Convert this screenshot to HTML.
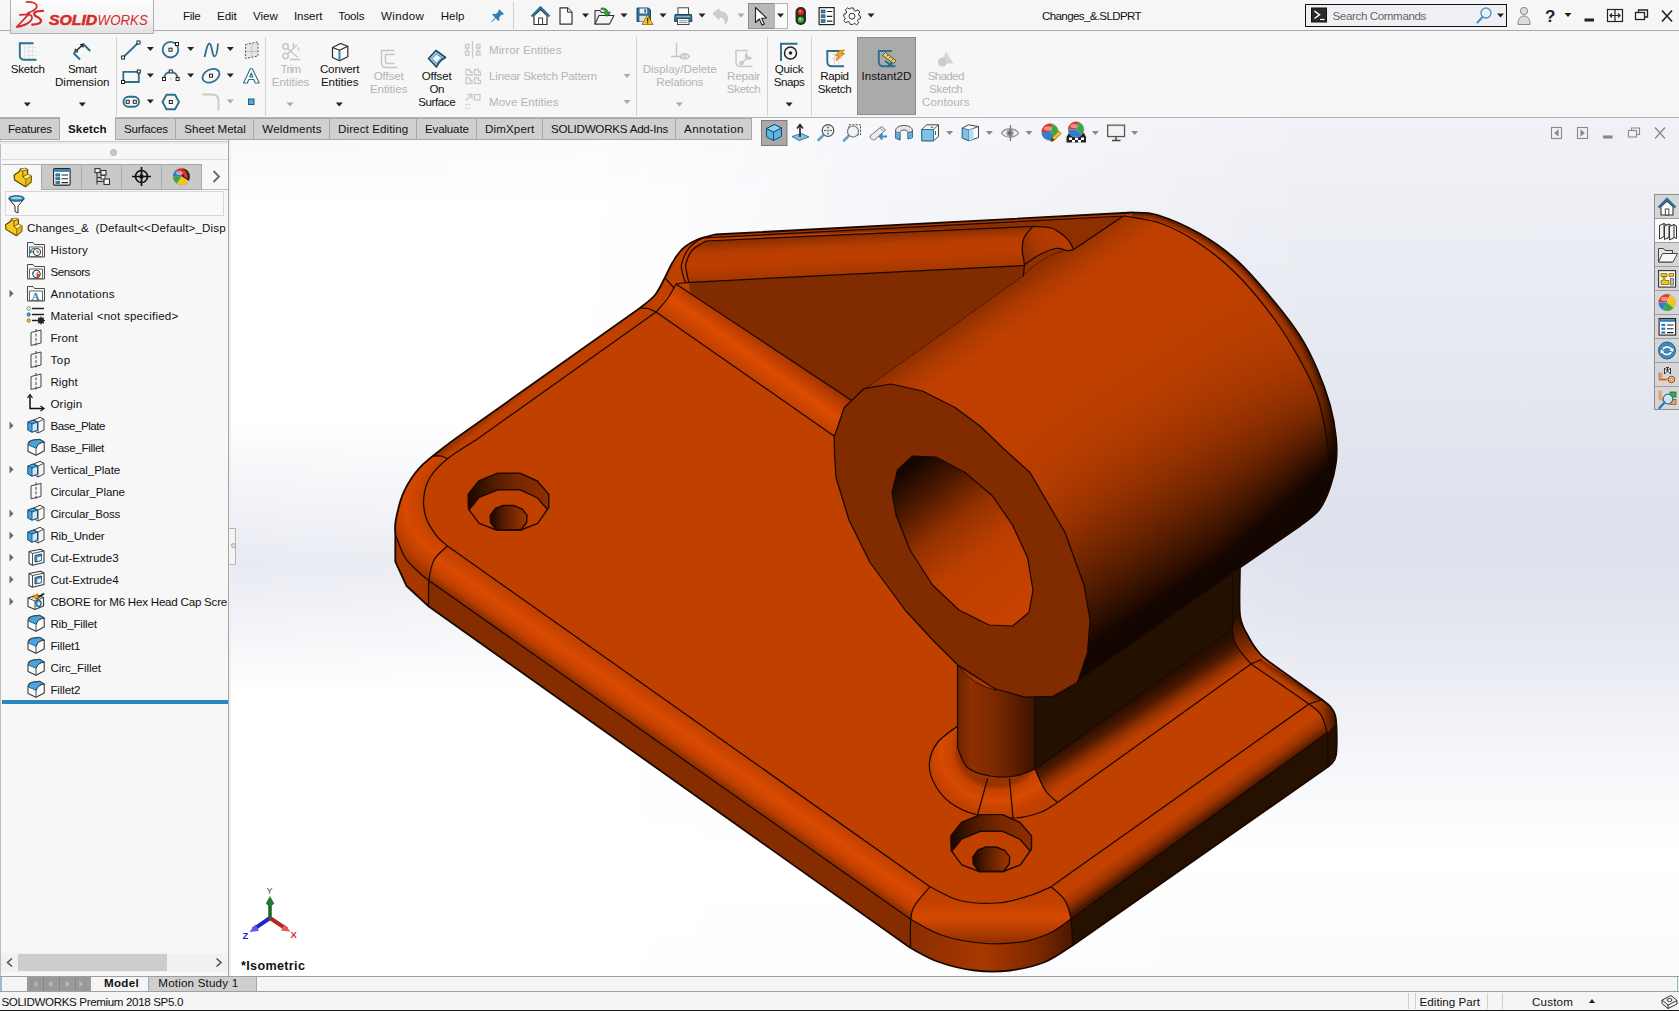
<!DOCTYPE html>
<html><head><meta charset="utf-8"><title>SOLIDWORKS - Changes_&amp;.SLDPRT</title>
<style>
html,body{margin:0;padding:0;background:#f7f7f7;}
body{width:1679px;height:1011px;overflow:hidden;font-family:"Liberation Sans",sans-serif;font-size:11.6px;color:#111;}
#app{position:relative;width:1679px;height:1011px;overflow:hidden;background:#f7f7f7;}
.t{position:absolute;white-space:pre;line-height:15px;height:15px;}
.a{position:absolute;}
.tab{position:absolute;top:118px;height:21px;background:#d0d0d0;border:1px solid #a8a8a8;border-bottom:none;box-sizing:border-box;}
.vsep{position:absolute;width:1px;background:#d2d2d2;top:37px;height:79px;}
.dd{position:absolute;width:0;height:0;border-left:3.5px solid transparent;border-right:3.5px solid transparent;border-top:4px solid #222;}
.dd.g{border-top-color:#aaa;}
.exp{position:absolute;width:0;height:0;border-top:4px solid transparent;border-bottom:4px solid transparent;border-left:5px solid #555;}

</style></head>
<body>
<div id="app">
<!-- viewport background -->
<div class="a" id="vp" style="left:230px;top:118px;width:1449px;height:858px;background:#fff;overflow:hidden;">
  <div class="a" style="left:0;top:0;width:100%;height:100%;background:linear-gradient(to bottom,#f1f2f7 0%,#e6e9f1 28%,#dee1ec 49%,#e3e6ef 58%,#f5f6fa 74%,#ffffff 86%,#fbfbfd 100%);-webkit-mask-image:linear-gradient(to right,rgba(0,0,0,0) 0%,rgba(0,0,0,0) 22%,rgba(0,0,0,.55) 45%,rgba(0,0,0,1) 75%);mask-image:linear-gradient(to right,rgba(0,0,0,0) 0%,rgba(0,0,0,0) 22%,rgba(0,0,0,.55) 45%,rgba(0,0,0,1) 75%);"></div>
  <div class="a" style="left:0;top:0;width:45%;height:100%;background:linear-gradient(to bottom,#f6f7fa 0%,#ffffff 10%,#ffffff 35%,#e8eaf2 52%,#ffffff 67%,#ffffff 100%);-webkit-mask-image:linear-gradient(to right,rgba(0,0,0,1) 0%,rgba(0,0,0,.8) 40%,rgba(0,0,0,0) 100%);mask-image:linear-gradient(to right,rgba(0,0,0,1) 0%,rgba(0,0,0,.8) 40%,rgba(0,0,0,0) 100%);"></div>
</div>
<!-- top bars -->
<div class="a" style="left:0;top:0;width:1679px;height:30px;background:#f6f6f6;"></div>
<div class="a" style="left:0;top:30px;width:1679px;height:1px;background:#a9a9a9;"></div>
<div class="a" style="left:0;top:31px;width:1679px;height:86px;background:#f7f7f7;"></div>
<div class="a" style="left:0;top:117px;width:1679px;height:1px;background:#b4b4b4;"></div>
<div class="a" style="left:10px;top:-1px;width:144px;height:35px;box-sizing:border-box;border:1px solid #b0b0b0;background:linear-gradient(to bottom,#fdfdfd 0%,#f4f4f4 55%,#e2e2e2 100%);"></div>
<div class="a" style="left:513px;top:2px;width:1px;height:27px;background:#cfcfcf;"></div>
<!-- ribbon separators -->
<div class="vsep" style="left:116px"></div><div class="vsep" style="left:265px"></div><div class="vsep" style="left:636px"></div><div class="vsep" style="left:767px"></div><div class="vsep" style="left:811px"></div>
<div class="a" style="left:857px;top:37px;width:59px;height:78px;box-sizing:border-box;background:#aaaaaa;border:1px solid #8c8c8c;"></div>
<!-- left panel -->
<div class="a" style="left:0;top:139px;width:229px;height:837px;background:#f7f7f7;"></div>
<div class="a" style="left:228px;top:139px;width:1px;height:837px;background:#a5a5a5;"></div>
<div class="a" style="left:229px;top:139px;width:2px;height:837px;background:#f0f0f0;"></div>
<div class="a" style="left:0;top:139px;width:1px;height:837px;background:#bdbdbd;"></div>
<div class="a" style="left:0;top:141px;width:228px;height:1px;background:#c9c9c9;"></div>
<div class="a" style="left:0;top:142px;width:228px;height:2px;background:#ececec;"></div>
<div class="a" style="left:0;top:159px;width:228px;height:1px;background:#dcdcdc;"></div>
<div class="a" style="left:109.5px;top:148.5px;width:5px;height:5px;border-radius:50%;background:#c9c9c9;border:1px solid #b3b3b3;box-sizing:content-box;"></div>
<!-- panel tabs -->
<div class="a" style="left:41px;top:164px;width:161px;height:26px;background:#c9c9c9;border:1px solid #a9a9a9;box-sizing:border-box;"></div>
<div class="a" style="left:81px;top:165px;width:1px;height:24px;background:#a9a9a9;"></div>
<div class="a" style="left:121px;top:165px;width:1px;height:24px;background:#a9a9a9;"></div>
<div class="a" style="left:161px;top:165px;width:1px;height:24px;background:#a9a9a9;"></div>
<div class="a" style="left:2px;top:189px;width:39px;height:1px;background:#f7f7f7;"></div>
<div class="a" style="left:202px;top:189px;width:26px;height:1px;background:#bdbdbd;"></div>
<div class="a" style="left:5px;top:191px;width:219px;height:25px;box-sizing:border-box;border:1px solid #d8d8d8;background:#f9f9f9;"></div>
<div class="a" style="left:2px;top:164px;width:39px;height:1px;background:#b4b4b4;"></div>
<!-- blue rollback bar -->
<div class="a" style="left:2px;top:700px;width:226px;height:4px;background:#2a86c0;"></div>
<!-- splitter handle -->
<div class="a" style="left:229px;top:528px;width:7px;height:37px;box-sizing:border-box;background:#f4f4f4;border:1px solid #b5b5b5;border-left:none;"></div>
<div class="a" style="left:230.5px;top:543px;width:3px;height:3px;border-radius:50%;border:1px solid #aaa;background:#ddd;"></div>
<!-- h scrollbar -->
<div class="a" style="left:1px;top:953px;width:227px;height:19px;background:#f1f1f1;"></div>
<div class="a" style="left:18px;top:954px;width:149px;height:17px;background:#cdcdcd;"></div>
<svg class="a" style="left:0;top:953px" width="229" height="19"><path d="M12 5.5 L7.5 9.5 L12 13.5" fill="none" stroke="#555" stroke-width="1.6"/><path d="M216.5 5.5 L221 9.5 L216.5 13.5" fill="none" stroke="#555" stroke-width="1.6"/></svg>
<!-- bottom bars -->
<div class="a" style="left:0;top:976px;width:1679px;height:1px;background:#9f9f9f;"></div>
<div class="a" style="left:0;top:977px;width:1679px;height:14px;background:#f5f5f5;"></div>
<div class="a" style="left:0;top:977px;width:2px;height:14px;background:#9bbcc8;"></div>
<div class="a" style="left:27px;top:977px;width:64px;height:14px;background:#9a9a9a;"></div>
<svg class="a" style="left:27px;top:977px" width="64" height="14"><g fill="#b9b9b9" stroke="#8a8a8a" stroke-width=".6"><path d="M5 3v8M11 3 L6 7 L11 11z"/><path d="M26 3 L20 7 L26 11z"/><path d="M38 3 L44 7 L38 11z"/><path d="M52 3 L57 7 L52 11z M58.5 3v8"/></g><g stroke="#858585" stroke-width="1"><path d="M16.5 0v14M32.5 0v14M48.5 0v14"/></g></svg>
<div class="a" style="left:148px;top:977px;width:109px;height:14px;background:#cfcfcf;border-left:1px solid #a8a8a8;border-right:1px solid #a8a8a8;box-sizing:border-box;"></div>
<div class="a" style="left:0;top:991px;width:1679px;height:1px;background:#a0a0a0;"></div>
<div class="a" style="left:0;top:992px;width:1679px;height:18px;background:#f5f5f5;"></div>
<div class="a" style="left:0;top:1009.5px;width:1679px;height:1.5px;background:#1a1a1a;"></div>
<div class="a" style="left:1408px;top:993px;width:1px;height:16px;background:#cfcfcf;"></div>
<div class="a" style="left:1415px;top:993px;width:1px;height:16px;background:#cfcfcf;"></div>
<div class="a" style="left:1487px;top:993px;width:1px;height:16px;background:#cfcfcf;"></div>
<div class="a" style="left:1502px;top:993px;width:1px;height:16px;background:#cfcfcf;"></div>
<div class="a" style="left:1589px;top:999px;width:0;height:0;border-left:3.5px solid transparent;border-right:3.5px solid transparent;border-bottom:4px solid #222;"></div>
<div class="a" style="left:1677px;top:977px;width:1px;height:14px;background:#8fb6cc;"></div>
<!-- command manager tabs -->
<div class="tab" style="left:-1px;width:61px"></div>
<div class="a" style="left:60px;top:117px;width:55px;height:24px;background:#f7f7f7;"></div>
<div class="tab" style="left:115px;width:61px"></div><div class="tab" style="left:175px;width:79px"></div><div class="tab" style="left:253px;width:77px"></div><div class="tab" style="left:329px;width:88px"></div><div class="tab" style="left:416px;width:61px"></div><div class="tab" style="left:476px;width:67px"></div><div class="tab" style="left:542px;width:134px"></div><div class="tab" style="left:675px;width:77px"></div>
<div class="a" style="left:115px;top:139px;width:637px;height:1px;background:#a8a8a8;"></div>
<div class="a" style="left:0px;top:139px;width:60px;height:1px;background:#a8a8a8;"></div>
<!-- search box -->
<div class="a" style="left:1305px;top:4px;width:202px;height:23px;box-sizing:border-box;border:1px solid #111;background:#eff0f4;"></div>

<svg class="a" style="left:0;top:0" width="1679" height="1011" viewBox="0 0 1679 1011">
<defs>
<clipPath id="vpclip"><rect x="231" y="118" width="1448" height="858"/></clipPath>
<linearGradient id="gBL" gradientUnits="userSpaceOnUse" x1="447.5" y1="546" x2="425" y2="578"><stop offset="0" stop-color="#c04000"/><stop offset=".2" stop-color="#c94400"/><stop offset=".42" stop-color="#da4b00"/><stop offset=".6" stop-color="#d04600"/><stop offset=".78" stop-color="#bc3f00"/><stop offset=".92" stop-color="#9a3300"/><stop offset="1" stop-color="#862d00"/></linearGradient>
<linearGradient id="gBR" gradientUnits="userSpaceOnUse" x1="1051" y1="886.75" x2="1071" y2="915"><stop offset="0" stop-color="#c04000"/><stop offset=".4" stop-color="#c44100"/><stop offset=".7" stop-color="#a03500"/><stop offset=".9" stop-color="#6a2300"/><stop offset="1" stop-color="#4a1800"/></linearGradient>
<linearGradient id="gBC" gradientUnits="userSpaceOnUse" x1="990" y1="900" x2="990" y2="944"><stop offset="0" stop-color="#c04000"/><stop offset=".4" stop-color="#d64900"/><stop offset="1" stop-color="#8e2f00"/></linearGradient>
<linearGradient id="gSideC" gradientUnits="userSpaceOnUse" x1="911" y1="0" x2="1072" y2="0"><stop offset="0" stop-color="#8a2e00"/><stop offset=".45" stop-color="#a83800"/><stop offset=".8" stop-color="#7a2800"/><stop offset="1" stop-color="#4a1800"/></linearGradient>
<linearGradient id="gUL" gradientUnits="userSpaceOnUse" x1="556" y1="382" x2="545" y2="368"><stop offset="0" stop-color="#c04000"/><stop offset=".5" stop-color="#c04000"/><stop offset="1" stop-color="#8e2f00"/></linearGradient>
<linearGradient id="gVF" gradientUnits="userSpaceOnUse" x1="745" y1="374" x2="771" y2="338"><stop offset="0" stop-color="#c04000"/><stop offset=".42" stop-color="#dc4c00"/><stop offset=".8" stop-color="#b03a00"/><stop offset="1" stop-color="#822b00"/></linearGradient>
<linearGradient id="gTF" gradientUnits="userSpaceOnUse" x1="860" y1="233" x2="862" y2="274"><stop offset="0" stop-color="#862d00"/><stop offset=".3" stop-color="#b63d00"/><stop offset=".6" stop-color="#be3f00"/><stop offset="1" stop-color="#a43700"/></linearGradient>
<linearGradient id="gCyl" gradientUnits="userSpaceOnUse" x1="865" y1="389" x2="1071" y2="685"><stop offset="0" stop-color="#8e2f00"/><stop offset=".1" stop-color="#b83d00"/><stop offset=".25" stop-color="#c04000"/><stop offset=".45" stop-color="#b43c00"/><stop offset=".62" stop-color="#8a2e00"/><stop offset=".8" stop-color="#461700"/><stop offset=".92" stop-color="#1e0a00"/><stop offset="1" stop-color="#160700"/></linearGradient>
<linearGradient id="gBore" gradientUnits="userSpaceOnUse" x1="905" y1="470" x2="1015" y2="615"><stop offset="0" stop-color="#160600"/><stop offset=".18" stop-color="#4a1800"/><stop offset=".4" stop-color="#963200"/><stop offset=".62" stop-color="#bd3f00"/><stop offset="1" stop-color="#c64200"/></linearGradient>
<linearGradient id="gPost" gradientUnits="userSpaceOnUse" x1="957" y1="0" x2="1035" y2="0"><stop offset="0" stop-color="#6a2300"/><stop offset=".18" stop-color="#8e2f00"/><stop offset=".45" stop-color="#7e2a00"/><stop offset=".78" stop-color="#581d00"/><stop offset="1" stop-color="#3a1300"/></linearGradient>
<linearGradient id="gRibF" gradientUnits="userSpaceOnUse" x1="1140" y1="697" x2="1160" y2="728"><stop offset="0" stop-color="#2a0e00"/><stop offset=".3" stop-color="#4e1a00"/><stop offset=".6" stop-color="#963200"/><stop offset=".85" stop-color="#bd3f00"/><stop offset="1" stop-color="#c04000"/></linearGradient>
<linearGradient id="gHoleA" gradientUnits="userSpaceOnUse" x1="467" y1="0" x2="549" y2="0"><stop offset="0" stop-color="#1a0800"/><stop offset=".35" stop-color="#6a2300"/><stop offset=".7" stop-color="#963200"/><stop offset="1" stop-color="#a83800"/></linearGradient>
<linearGradient id="gHoleB" gradientUnits="userSpaceOnUse" x1="950" y1="0" x2="1032" y2="0"><stop offset="0" stop-color="#1a0800"/><stop offset=".35" stop-color="#6a2300"/><stop offset=".7" stop-color="#963200"/><stop offset="1" stop-color="#a83800"/></linearGradient>
<linearGradient id="gRibEnd" gradientUnits="userSpaceOnUse" x1="1236" y1="618" x2="1254" y2="662"><stop offset="0" stop-color="#2a1000"/><stop offset=".45" stop-color="#6a2300"/><stop offset="1" stop-color="#b83d00"/></linearGradient>
<radialGradient id="gRing" gradientUnits="userSpaceOnUse" cx="997" cy="752" r="70" gradientTransform="translate(0 94) scale(1 .875)"><stop offset="0" stop-color="#9a3300"/><stop offset=".55" stop-color="#9a3300"/><stop offset=".63" stop-color="#c44200"/><stop offset=".8" stop-color="#d84a00"/><stop offset="1" stop-color="#c04000"/></radialGradient>
<linearGradient id="gCap" gradientUnits="userSpaceOnUse" x1="1023" y1="250" x2="1065" y2="235"><stop offset="0" stop-color="#8e2f00"/><stop offset=".35" stop-color="#ac3900"/><stop offset="1" stop-color="#b83d00"/></linearGradient>
<linearGradient id="gEndF" gradientUnits="userSpaceOnUse" x1="1280" y1="684" x2="1286.500" y2="674.600"><stop offset="0" stop-color="#c04000"/><stop offset=".35" stop-color="#b83d00"/><stop offset=".7" stop-color="#8a2e00"/><stop offset="1" stop-color="#4a1800"/></linearGradient>
<linearGradient id="gRC" gradientUnits="userSpaceOnUse" x1="1312" y1="0" x2="1337" y2="0"><stop offset="0" stop-color="#bd3f00"/><stop offset=".45" stop-color="#963200"/><stop offset="1" stop-color="#341100"/></linearGradient>
<radialGradient id="gLC" gradientUnits="userSpaceOnUse" cx="466" cy="500" r="86"><stop offset="0" stop-color="#c04000"/><stop offset=".5" stop-color="#c04000"/><stop offset=".62" stop-color="#d04600"/><stop offset=".72" stop-color="#d64900"/><stop offset=".85" stop-color="#c04000"/><stop offset="1" stop-color="#983200"/></radialGradient>
</defs>
<g clip-path="url(#vpclip)">
<path d="M715.0 234.5 L1132.5 212.5 C1136.7 212.9 1146.2 211.5 1157.5 215.0 C1168.8 218.5 1186.7 226.1 1200.0 233.8 C1213.3 241.4 1225.0 249.5 1237.5 261.0 C1250.0 272.5 1264.6 290.0 1275.0 302.5 C1285.4 315.0 1292.9 324.8 1300.0 336.0 C1307.1 347.2 1312.5 358.5 1317.5 370.0 C1322.5 381.5 1326.9 393.8 1330.0 405.0 C1333.1 416.2 1335.0 427.9 1336.0 437.5 C1337.0 447.1 1337.0 454.2 1336.0 462.5 C1335.0 470.8 1332.8 479.6 1330.0 487.5 C1327.2 495.4 1324.0 503.6 1319.0 510.0 C1314.0 516.4 1303.2 523.3 1300.0 526.0 L1240.0 567.5 C1240.0 575.4 1238.8 603.8 1240.0 615.0 C1241.2 626.2 1244.2 628.5 1247.5 635.0 C1250.8 641.5 1255.4 648.6 1260.0 653.8 C1264.6 658.9 1272.5 664.0 1275.0 666.0 L1322.5 700.0 C1323.9 701.2 1328.8 704.2 1331.0 707.5 C1333.2 710.8 1335.2 712.1 1336.0 720.0 C1336.8 727.9 1337.2 747.3 1336.0 755.0 C1334.8 762.7 1330.2 764.2 1329.0 766.0 L1072.5 945.5 C1067.9 948.2 1055.4 957.8 1045.0 962.0 C1034.6 966.2 1021.7 969.1 1010.0 970.5 C998.3 971.9 986.9 971.9 975.0 970.5 C963.1 969.1 949.5 965.8 938.7 962.0 C927.9 958.2 915.0 950.2 910.2 947.8 L428.8 606.5 L406.6 586.0 L395.3 561.6 L395.3 535.3 C395.4 532.8 394.4 527.2 395.8 520.0 C397.2 512.8 399.8 500.7 403.8 492.0 C407.8 483.3 412.6 475.4 419.8 467.6 C427.0 459.8 439.0 451.3 447.0 445.0 C455.0 438.7 464.2 432.5 467.7 430.0 L640.0 308.0 C642.5 305.8 650.8 300.1 655.0 295.0 C659.2 289.9 662.1 282.9 665.0 277.5 C667.9 272.1 669.6 267.3 672.5 262.5 C675.4 257.7 678.3 252.6 682.5 248.8 C686.7 244.9 692.1 241.9 697.5 239.5 C702.9 237.1 712.1 235.3 715.0 234.5 Z" fill="#c04000"/>
<path d="M428.0 580.0 L911.0 919.5 L910.2 947.8 L428.8 606.5Z" fill="#862d00"/>
<path d="M911.0 919.5 C916.2 922.2 930.2 931.5 942.5 935.5 C954.8 939.5 971.7 942.5 985.0 943.5 C998.3 944.5 1011.7 943.5 1022.5 941.8 C1033.3 940.0 1041.9 936.8 1050.0 933.0 C1058.1 929.2 1067.5 921.3 1071.0 919.0 L1072.5 945.5 C1067.9 948.2 1055.4 957.8 1045.0 962.0 C1034.6 966.2 1021.7 969.1 1010.0 970.5 C998.3 971.9 986.9 971.9 975.0 970.5 C963.1 969.1 949.5 965.8 938.7 962.0 C927.9 958.2 915.0 950.2 910.2 947.8 L910.2 947.8Z" fill="url(#gSideC)"/>
<path d="M1071.0 919.0 L1327.5 732.5 L1336.0 722.0 L1336.0 755.0 L1329.0 766.0 L1072.5 945.5Z" fill="#261000"/>
<path d="M395.5 535.0 C397.1 538.8 401.3 551.5 405.0 557.5 C408.7 563.5 413.7 567.2 417.5 571.0 C421.3 574.8 426.2 578.5 428.0 580.0 L428.8 606.5 L406.6 586.0 L395.3 561.6 L395.3 535.3Z" fill="#a63700"/>
<path d="M447.5 546.0 L930.0 886.8 L913.8 905.5 L911.0 919.5 L428.0 580.0 L429.0 563.0Z" fill="url(#gBL)"/>
<path d="M930.0 886.8 C935.0 889.0 948.8 897.8 960.0 900.5 C971.2 903.2 985.8 903.8 997.5 903.0 C1009.2 902.2 1021.1 898.2 1030.0 895.5 C1038.9 892.8 1047.5 888.2 1051.0 886.8 L1065.0 900.5 L1071.0 919.0 C1067.5 921.3 1058.1 929.2 1050.0 933.0 C1041.9 936.8 1033.3 940.0 1022.5 941.8 C1011.7 943.5 998.3 944.5 985.0 943.5 C971.7 942.5 954.8 939.5 942.5 935.5 C930.2 931.5 916.2 922.2 911.0 919.5 L913.8 905.5Z" fill="url(#gBC)"/>
<path d="M1051.0 886.8 L1309.0 704.0 C1311.0 705.8 1317.9 710.2 1321.0 715.0 C1324.1 719.8 1326.4 729.6 1327.5 732.5 L1071.0 919.0 L1065.0 900.5Z" fill="url(#gBR)"/>
<path d="M476.0 440.0 C471.2 443.1 455.2 452.5 447.5 458.8 C439.8 465.0 434.0 471.0 430.0 477.5 C426.0 484.0 424.4 490.8 423.8 497.5 C423.1 504.2 424.0 511.2 426.0 517.5 C428.0 523.8 432.4 530.2 436.0 535.0 C439.6 539.8 445.6 544.2 447.5 546.0 L429.0 563.0 L428.0 580.0 C426.2 578.5 421.3 574.8 417.5 571.0 C413.7 567.2 408.7 563.5 405.0 557.5 C401.3 551.5 397.1 538.8 395.5 535.0 C395.4 532.8 394.4 527.2 395.8 520.0 C397.2 512.8 399.8 500.7 403.8 492.0 C407.8 483.3 414.8 473.6 419.8 467.6 C424.8 461.6 431.4 457.9 433.8 456.0 L447.5 458.8Z" fill="url(#gLC)"/>
<path d="M433.8 456.0 L640.0 308.0 L656.0 312.0 L447.5 458.8Z" fill="url(#gUL)"/>
<path d="M1251.0 664.0 L1309.0 704.0 L1322.5 699.5 L1261.0 659.5Z" fill="url(#gEndF)"/>
<path d="M1309.0 704.0 C1311.0 705.8 1317.9 710.2 1321.0 715.0 C1324.1 719.8 1326.4 729.6 1327.5 732.5 L1336.0 722.0 L1336.0 720.0 C1335.2 717.9 1333.2 710.9 1331.0 707.5 C1328.8 704.1 1323.9 700.8 1322.5 699.5Z" fill="url(#gRC)"/>
<path d="M702.0 238.0 L715.0 234.5 L1132.5 212.5 L1125.0 216.0 L1072.5 250.0 L1025.0 275.0 L1025.0 226.5Z" fill="#8e2f00"/>
<path d="M700.0 239.0 L1125.0 216.0 L1132.5 212.5 L715.0 234.5Z" fill="#a83800"/>
<path d="M706.0 241.0 L1030.0 226.0 C1028.8 229.2 1023.8 238.4 1023.0 245.0 C1022.2 251.6 1024.7 262.1 1025.0 265.5 L688.8 282.6 C688.4 280.9 687.1 275.4 686.6 272.2 C686.1 269.0 685.1 267.1 686.0 263.5 C686.9 259.9 689.4 253.8 692.0 250.5 C694.6 247.2 699.5 245.0 701.8 243.4 C704.1 241.8 705.3 241.4 706.0 241.0Z" fill="url(#gTF)"/>
<path d="M1032.9 226.4 C1035.9 226.7 1046.1 226.6 1051.1 228.0 C1056.1 229.4 1059.9 232.8 1062.9 235.0 C1065.9 237.2 1067.5 239.0 1069.3 241.4 C1071.1 243.8 1072.9 248.2 1073.6 249.5 C1072.5 249.7 1070.0 250.8 1067.2 250.6 C1064.4 250.4 1061.0 247.8 1056.5 248.4 C1052.0 249.0 1045.6 251.7 1040.4 254.3 C1035.2 256.9 1027.9 262.4 1025.4 264.0 C1023.9 261.7 1022.2 254.5 1022.2 250.0 C1022.2 245.5 1022.5 241.1 1024.3 237.2 C1026.1 233.3 1031.5 228.2 1032.9 226.4Z" fill="url(#gCap)"/>
<path d="M640.0 308.0 C642.5 305.8 650.8 300.1 655.0 295.0 C659.2 289.9 662.1 282.9 665.0 277.5 C667.9 272.1 669.6 267.3 672.5 262.5 C675.4 257.7 678.3 252.6 682.5 248.8 C686.7 244.9 693.8 240.8 697.5 239.5 C701.2 238.2 703.8 240.8 705.0 241.0 C705.3 241.4 704.1 241.8 701.8 243.4 C699.5 245.0 694.6 247.2 692.0 250.5 C689.4 253.8 686.9 259.9 686.0 263.5 C685.1 267.1 686.1 269.0 686.6 272.2 C687.1 275.4 688.4 280.9 688.8 282.6 L676.0 284.0 L656.0 312.0Z" fill="#c04000"/>
<path d="M688.8 282.8 L1025.0 265.5 L1025.0 275.0 L865.0 388.8 L851.0 400.0 L690.0 292.3Z" fill="#802b00"/>
<path d="M656.0 312.0 L676.0 284.0 L851.0 400.0 L842.5 412.5 L834.0 436.0Z" fill="url(#gVF)"/>
<path d="M1035.0 680.0 L1077.5 668.0 L1240.0 567.5 L1240.0 615.0 L1232.5 629.0 L1035.0 769.0Z" fill="#241000"/>
<path d="M1035.0 769.0 L1232.5 629.0 C1233.1 631.7 1232.9 639.2 1236.0 645.0 C1239.1 650.8 1248.5 660.8 1251.0 664.0 L1057.5 802.5 C1055.4 800.4 1048.8 795.6 1045.0 790.0 C1041.2 784.4 1036.7 772.5 1035.0 769.0Z" fill="url(#gRibF)"/>
<path d="M1232.5 629.0 C1233.1 631.7 1232.9 639.2 1236.0 645.0 C1239.1 650.8 1248.5 660.8 1251.0 664.0 L1261.0 659.5 C1258.8 655.4 1251.0 642.4 1247.5 635.0 C1244.0 627.6 1241.2 618.3 1240.0 615.0Z" fill="url(#gRibEnd)"/>
<path d="M957.5 726.0 C954.2 728.8 942.2 736.4 937.5 742.5 C932.8 748.6 930.1 755.8 929.5 762.5 C928.9 769.2 930.3 775.8 933.8 782.5 C937.2 789.2 942.7 797.1 950.0 802.5 C957.3 807.9 966.7 812.4 977.5 815.0 C988.3 817.6 1004.6 818.4 1015.0 818.0 C1025.4 817.6 1032.9 815.1 1040.0 812.5 C1047.1 809.9 1054.6 804.2 1057.5 802.5 C1055.4 800.4 1048.8 795.6 1045.0 790.0 C1041.2 784.4 1036.7 772.5 1035.0 769.0 C1031.7 770.2 1022.5 774.8 1015.0 776.0 C1007.5 777.2 997.9 777.4 990.0 776.0 C982.1 774.6 972.9 772.2 967.5 767.5 C962.1 762.8 959.2 750.8 957.5 747.5 Z" fill="url(#gRing)"/>
<path d="M957.5 655.0 L957.5 747.5 C959.2 750.8 962.1 762.8 967.5 767.5 C972.9 772.2 982.1 774.6 990.0 776.0 C997.9 777.4 1007.5 777.2 1015.0 776.0 C1022.5 774.8 1031.7 770.2 1035.0 769.0 L1035.0 680.0Z" fill="url(#gPost)"/>
<path d="M958.5 666 Q972 685 997 690.500 L990 685 Q972 675 958.500 666Z" fill="#a83800" stroke="#1a0800" stroke-width=".7"/>
<path d="M865.0 388.8 L1023.3 275.8 L1025.4 264.0 C1027.9 262.4 1035.2 256.9 1040.4 254.3 C1045.6 251.7 1052.0 249.0 1056.5 248.4 C1061.0 247.8 1064.4 250.4 1067.2 250.6 C1070.0 250.8 1072.5 249.7 1073.6 249.5 L1123.0 216.3 L1125.0 216.0 C1131.2 217.3 1150.0 219.3 1162.5 224.0 C1175.0 228.7 1187.5 235.5 1200.0 244.0 C1212.5 252.5 1225.0 262.3 1237.5 275.0 C1250.0 287.7 1264.6 305.8 1275.0 320.0 C1285.4 334.2 1292.9 347.1 1300.0 360.0 C1307.1 372.9 1313.2 385.0 1317.5 397.5 C1321.8 410.0 1324.1 423.8 1326.0 435.0 C1327.9 446.2 1329.0 456.2 1329.0 465.0 C1329.0 473.8 1327.9 480.0 1326.0 487.5 C1324.1 495.0 1318.9 506.2 1317.5 510.0 L1300.0 526.0 L1240.0 567.5 L1077.5 681.0 L1025.0 697.1 L1053.1 696.4 L1077.5 682.5 L1087.5 652.5 L1090.0 620.0 L1084.0 585.0 L1065.0 532.5 L1030.0 472.5 L1005.0 450.0 L980.0 426.0 L955.0 407.5 L922.5 391.0 L890.8 384.0 L863.9 388.7Z" fill="url(#gCyl)"/>
<path d="M1132.5 212.5 C1136.7 212.9 1146.2 211.5 1157.5 215.0 C1168.8 218.5 1186.7 226.1 1200.0 233.8 C1213.3 241.4 1225.0 249.5 1237.5 261.0 C1250.0 272.5 1264.6 290.0 1275.0 302.5 C1285.4 315.0 1292.9 324.8 1300.0 336.0 C1307.1 347.2 1312.5 358.5 1317.5 370.0 C1322.5 381.5 1326.9 393.8 1330.0 405.0 C1333.1 416.2 1335.0 427.9 1336.0 437.5 C1337.0 447.1 1337.0 454.2 1336.0 462.5 C1335.0 470.8 1332.8 479.6 1330.0 487.5 C1327.2 495.4 1324.0 503.6 1319.0 510.0 C1314.0 516.4 1303.2 523.3 1300.0 526.0 L1317.5 510.0 C1318.9 506.2 1324.1 495.0 1326.0 487.5 C1327.9 480.0 1329.0 473.8 1329.0 465.0 C1329.0 456.2 1327.9 446.2 1326.0 435.0 C1324.1 423.8 1321.8 410.0 1317.5 397.5 C1313.2 385.0 1307.1 372.9 1300.0 360.0 C1292.9 347.1 1285.4 334.2 1275.0 320.0 C1264.6 305.8 1250.0 287.7 1237.5 275.0 C1225.0 262.3 1212.5 252.5 1200.0 244.0 C1187.5 235.5 1175.0 228.7 1162.5 224.0 C1150.0 219.3 1131.2 217.3 1125.0 216.0 L1132.5 212.5Z" fill="url(#gCyl)"/>
<clipPath id="cylclip"><path d="M865.0 388.8 L1023.3 275.8 L1025.4 264.0 C1027.9 262.4 1035.2 256.9 1040.4 254.3 C1045.6 251.7 1052.0 249.0 1056.5 248.4 C1061.0 247.8 1064.4 250.4 1067.2 250.6 C1070.0 250.8 1072.5 249.7 1073.6 249.5 L1123.0 216.3 L1125.0 216.0 C1131.2 217.3 1150.0 219.3 1162.5 224.0 C1175.0 228.7 1187.5 235.5 1200.0 244.0 C1212.5 252.5 1225.0 262.3 1237.5 275.0 C1250.0 287.7 1264.6 305.8 1275.0 320.0 C1285.4 334.2 1292.9 347.1 1300.0 360.0 C1307.1 372.9 1313.2 385.0 1317.5 397.5 C1321.8 410.0 1324.1 423.8 1326.0 435.0 C1327.9 446.2 1329.0 456.2 1329.0 465.0 C1329.0 473.8 1327.9 480.0 1326.0 487.5 C1324.1 495.0 1318.9 506.2 1317.5 510.0 L1300.0 526.0 L1240.0 567.5 L1077.5 681.0 L1025.0 697.1 L1053.1 696.4 L1077.5 682.5 L1087.5 652.5 L1090.0 620.0 L1084.0 585.0 L1065.0 532.5 L1030.0 472.5 L1005.0 450.0 L980.0 426.0 L955.0 407.5 L922.5 391.0 L890.8 384.0 L863.9 388.7Z"/><path d="M1132.5 212.5 C1136.7 212.9 1146.2 211.5 1157.5 215.0 C1168.8 218.5 1186.7 226.1 1200.0 233.8 C1213.3 241.4 1225.0 249.5 1237.5 261.0 C1250.0 272.5 1264.6 290.0 1275.0 302.5 C1285.4 315.0 1292.9 324.8 1300.0 336.0 C1307.1 347.2 1312.5 358.5 1317.5 370.0 C1322.5 381.5 1326.9 393.8 1330.0 405.0 C1333.1 416.2 1335.0 427.9 1336.0 437.5 C1337.0 447.1 1337.0 454.2 1336.0 462.5 C1335.0 470.8 1332.8 479.6 1330.0 487.5 C1327.2 495.4 1324.0 503.6 1319.0 510.0 C1314.0 516.4 1303.2 523.3 1300.0 526.0 L1317.5 510.0 C1318.9 506.2 1324.1 495.0 1326.0 487.5 C1327.9 480.0 1329.0 473.8 1329.0 465.0 C1329.0 456.2 1327.9 446.2 1326.0 435.0 C1324.1 423.8 1321.8 410.0 1317.5 397.5 C1313.2 385.0 1307.1 372.9 1300.0 360.0 C1292.9 347.1 1285.4 334.2 1275.0 320.0 C1264.6 305.8 1250.0 287.7 1237.5 275.0 C1225.0 262.3 1212.5 252.5 1200.0 244.0 C1187.5 235.5 1175.0 228.7 1162.5 224.0 C1150.0 219.3 1131.2 217.3 1125.0 216.0 L1132.5 212.5Z"/></clipPath>
<g clip-path="url(#cylclip)">
<defs><linearGradient id="cs0" gradientUnits="userSpaceOnUse" x1="940.0" y1="777.0" x2="728.5" y2="456.6"><stop offset="0.0000" stop-color="#130600"/><stop offset="0.0130" stop-color="#130600"/><stop offset="0.0261" stop-color="#130600"/><stop offset="0.0391" stop-color="#140600"/><stop offset="0.0522" stop-color="#150600"/><stop offset="0.0652" stop-color="#190700"/><stop offset="0.0783" stop-color="#210a00"/><stop offset="0.0913" stop-color="#280c00"/><stop offset="0.1043" stop-color="#2e0f00"/><stop offset="0.1174" stop-color="#351100"/><stop offset="0.1304" stop-color="#3b1400"/><stop offset="0.1706" stop-color="#4e1a00"/><stop offset="0.2107" stop-color="#602000"/><stop offset="0.2508" stop-color="#702500"/><stop offset="0.2910" stop-color="#7f2a00"/><stop offset="0.3311" stop-color="#8e2f00"/><stop offset="0.3712" stop-color="#9b3400"/><stop offset="0.4114" stop-color="#a53700"/><stop offset="0.4515" stop-color="#ae3a00"/><stop offset="0.4916" stop-color="#b43c00"/><stop offset="0.5318" stop-color="#b83d00"/><stop offset="0.5719" stop-color="#bb3e00"/><stop offset="0.6120" stop-color="#bd3f00"/><stop offset="0.6522" stop-color="#be3f00"/><stop offset="1.0000" stop-color="#bf4000"/></linearGradient><linearGradient id="cs1" gradientUnits="userSpaceOnUse" x1="1054.0" y1="697.4" x2="842.5" y2="377.0"><stop offset="0.0000" stop-color="#130600"/><stop offset="0.0130" stop-color="#130600"/><stop offset="0.0261" stop-color="#130600"/><stop offset="0.0391" stop-color="#140600"/><stop offset="0.0522" stop-color="#150600"/><stop offset="0.0652" stop-color="#190700"/><stop offset="0.0783" stop-color="#210a00"/><stop offset="0.0913" stop-color="#280c00"/><stop offset="0.1043" stop-color="#2e0f00"/><stop offset="0.1174" stop-color="#351100"/><stop offset="0.1304" stop-color="#3b1400"/><stop offset="0.1706" stop-color="#4e1a00"/><stop offset="0.2107" stop-color="#602000"/><stop offset="0.2508" stop-color="#702500"/><stop offset="0.2910" stop-color="#7f2a00"/><stop offset="0.3311" stop-color="#8e2f00"/><stop offset="0.3712" stop-color="#9b3400"/><stop offset="0.4114" stop-color="#a53700"/><stop offset="0.4515" stop-color="#ae3a00"/><stop offset="0.4916" stop-color="#b43c00"/><stop offset="0.5318" stop-color="#b83d00"/><stop offset="0.5719" stop-color="#bb3e00"/><stop offset="0.6120" stop-color="#bd3f00"/><stop offset="0.6522" stop-color="#be3f00"/><stop offset="1.0000" stop-color="#bf4000"/></linearGradient><linearGradient id="cs2" gradientUnits="userSpaceOnUse" x1="1062.0" y1="691.8" x2="850.5" y2="371.4"><stop offset="0.0000" stop-color="#130600"/><stop offset="0.0130" stop-color="#130600"/><stop offset="0.0261" stop-color="#130600"/><stop offset="0.0391" stop-color="#140600"/><stop offset="0.0522" stop-color="#150600"/><stop offset="0.0652" stop-color="#190700"/><stop offset="0.0783" stop-color="#210a00"/><stop offset="0.0913" stop-color="#280c00"/><stop offset="0.1043" stop-color="#2e0f00"/><stop offset="0.1174" stop-color="#351100"/><stop offset="0.1304" stop-color="#3b1400"/><stop offset="0.1706" stop-color="#4e1a00"/><stop offset="0.2107" stop-color="#602000"/><stop offset="0.2508" stop-color="#702500"/><stop offset="0.2910" stop-color="#7f2a00"/><stop offset="0.3311" stop-color="#8e2f00"/><stop offset="0.3712" stop-color="#9b3400"/><stop offset="0.4114" stop-color="#a53700"/><stop offset="0.4515" stop-color="#ae3a00"/><stop offset="0.4916" stop-color="#b43c00"/><stop offset="0.5318" stop-color="#b83d00"/><stop offset="0.5719" stop-color="#bb3e00"/><stop offset="0.6120" stop-color="#bd3f00"/><stop offset="0.6522" stop-color="#be3f00"/><stop offset="1.0000" stop-color="#bf4000"/></linearGradient><linearGradient id="cs3" gradientUnits="userSpaceOnUse" x1="1070.0" y1="686.2" x2="858.5" y2="365.8"><stop offset="0.0000" stop-color="#130600"/><stop offset="0.0130" stop-color="#130600"/><stop offset="0.0261" stop-color="#130600"/><stop offset="0.0391" stop-color="#140600"/><stop offset="0.0522" stop-color="#150600"/><stop offset="0.0652" stop-color="#190700"/><stop offset="0.0783" stop-color="#210a00"/><stop offset="0.0913" stop-color="#280c00"/><stop offset="0.1043" stop-color="#2e0f00"/><stop offset="0.1174" stop-color="#351100"/><stop offset="0.1304" stop-color="#3b1400"/><stop offset="0.1706" stop-color="#4e1a00"/><stop offset="0.2107" stop-color="#602000"/><stop offset="0.2508" stop-color="#702500"/><stop offset="0.2910" stop-color="#7f2a00"/><stop offset="0.3311" stop-color="#8e2f00"/><stop offset="0.3712" stop-color="#9b3400"/><stop offset="0.4114" stop-color="#a53700"/><stop offset="0.4515" stop-color="#ae3a00"/><stop offset="0.4916" stop-color="#b43c00"/><stop offset="0.5318" stop-color="#b83d00"/><stop offset="0.5719" stop-color="#bb3e00"/><stop offset="0.6120" stop-color="#bd3f00"/><stop offset="0.6522" stop-color="#be3f00"/><stop offset="1.0000" stop-color="#bf4000"/></linearGradient><linearGradient id="cs4" gradientUnits="userSpaceOnUse" x1="1078.0" y1="680.7" x2="866.5" y2="360.2"><stop offset="0.0000" stop-color="#130600"/><stop offset="0.0130" stop-color="#130600"/><stop offset="0.0261" stop-color="#130600"/><stop offset="0.0391" stop-color="#140600"/><stop offset="0.0522" stop-color="#150600"/><stop offset="0.0652" stop-color="#190700"/><stop offset="0.0783" stop-color="#210a00"/><stop offset="0.0913" stop-color="#280c00"/><stop offset="0.1043" stop-color="#2e0f00"/><stop offset="0.1174" stop-color="#351100"/><stop offset="0.1304" stop-color="#3b1400"/><stop offset="0.1706" stop-color="#4e1a00"/><stop offset="0.2107" stop-color="#602000"/><stop offset="0.2508" stop-color="#702500"/><stop offset="0.2910" stop-color="#7f2a00"/><stop offset="0.3311" stop-color="#8e2f00"/><stop offset="0.3712" stop-color="#9b3400"/><stop offset="0.4114" stop-color="#a53700"/><stop offset="0.4515" stop-color="#ae3a00"/><stop offset="0.4916" stop-color="#b43c00"/><stop offset="0.5318" stop-color="#b83d00"/><stop offset="0.5719" stop-color="#bb3e00"/><stop offset="0.6120" stop-color="#bd3f00"/><stop offset="0.6522" stop-color="#be3f00"/><stop offset="1.0000" stop-color="#bf4000"/></linearGradient><linearGradient id="cs5" gradientUnits="userSpaceOnUse" x1="1086.0" y1="675.1" x2="874.5" y2="354.6"><stop offset="0.0000" stop-color="#130600"/><stop offset="0.0130" stop-color="#130600"/><stop offset="0.0261" stop-color="#130600"/><stop offset="0.0391" stop-color="#140600"/><stop offset="0.0522" stop-color="#150600"/><stop offset="0.0652" stop-color="#190700"/><stop offset="0.0783" stop-color="#210a00"/><stop offset="0.0913" stop-color="#280c00"/><stop offset="0.1043" stop-color="#2e0f00"/><stop offset="0.1174" stop-color="#351100"/><stop offset="0.1304" stop-color="#3b1400"/><stop offset="0.1706" stop-color="#4e1a00"/><stop offset="0.2107" stop-color="#602000"/><stop offset="0.2508" stop-color="#702500"/><stop offset="0.2910" stop-color="#7f2a00"/><stop offset="0.3311" stop-color="#8e2f00"/><stop offset="0.3712" stop-color="#9b3400"/><stop offset="0.4114" stop-color="#a53700"/><stop offset="0.4515" stop-color="#ae3a00"/><stop offset="0.4916" stop-color="#b43c00"/><stop offset="0.5318" stop-color="#b83d00"/><stop offset="0.5719" stop-color="#bb3e00"/><stop offset="0.6120" stop-color="#bd3f00"/><stop offset="0.6522" stop-color="#be3f00"/><stop offset="1.0000" stop-color="#bf4000"/></linearGradient><linearGradient id="cs6" gradientUnits="userSpaceOnUse" x1="1094.0" y1="669.5" x2="882.5" y2="349.1"><stop offset="0.0000" stop-color="#130600"/><stop offset="0.0130" stop-color="#130600"/><stop offset="0.0261" stop-color="#130600"/><stop offset="0.0391" stop-color="#140600"/><stop offset="0.0522" stop-color="#150600"/><stop offset="0.0652" stop-color="#190700"/><stop offset="0.0783" stop-color="#210a00"/><stop offset="0.0913" stop-color="#280c00"/><stop offset="0.1043" stop-color="#2e0f00"/><stop offset="0.1174" stop-color="#351100"/><stop offset="0.1304" stop-color="#3b1400"/><stop offset="0.1706" stop-color="#4e1a00"/><stop offset="0.2107" stop-color="#602000"/><stop offset="0.2508" stop-color="#702500"/><stop offset="0.2910" stop-color="#7f2a00"/><stop offset="0.3311" stop-color="#8e2f00"/><stop offset="0.3712" stop-color="#9b3400"/><stop offset="0.4114" stop-color="#a53700"/><stop offset="0.4515" stop-color="#ae3a00"/><stop offset="0.4916" stop-color="#b43c00"/><stop offset="0.5318" stop-color="#b83d00"/><stop offset="0.5719" stop-color="#bb3e00"/><stop offset="0.6120" stop-color="#bd3f00"/><stop offset="0.6522" stop-color="#be3f00"/><stop offset="1.0000" stop-color="#bf4000"/></linearGradient><linearGradient id="cs7" gradientUnits="userSpaceOnUse" x1="1102.0" y1="663.9" x2="890.5" y2="343.5"><stop offset="0.0000" stop-color="#130600"/><stop offset="0.0130" stop-color="#130600"/><stop offset="0.0261" stop-color="#130600"/><stop offset="0.0391" stop-color="#140600"/><stop offset="0.0522" stop-color="#150600"/><stop offset="0.0652" stop-color="#190800"/><stop offset="0.0783" stop-color="#210a00"/><stop offset="0.0913" stop-color="#280d00"/><stop offset="0.1043" stop-color="#2f0f00"/><stop offset="0.1174" stop-color="#351100"/><stop offset="0.1304" stop-color="#3b1400"/><stop offset="0.1705" stop-color="#4f1a00"/><stop offset="0.2106" stop-color="#602000"/><stop offset="0.2506" stop-color="#712600"/><stop offset="0.2907" stop-color="#802b00"/><stop offset="0.3308" stop-color="#8e2f00"/><stop offset="0.3708" stop-color="#9b3400"/><stop offset="0.4109" stop-color="#a53700"/><stop offset="0.4510" stop-color="#ae3a00"/><stop offset="0.4910" stop-color="#b43c00"/><stop offset="0.5311" stop-color="#b83d00"/><stop offset="0.5712" stop-color="#bb3e00"/><stop offset="0.6112" stop-color="#bd3f00"/><stop offset="0.6513" stop-color="#be3f00"/><stop offset="1.0000" stop-color="#bf4000"/></linearGradient><linearGradient id="cs8" gradientUnits="userSpaceOnUse" x1="1110.0" y1="658.3" x2="898.5" y2="337.9"><stop offset="0.0000" stop-color="#130600"/><stop offset="0.0130" stop-color="#130600"/><stop offset="0.0261" stop-color="#130600"/><stop offset="0.0391" stop-color="#140600"/><stop offset="0.0522" stop-color="#150600"/><stop offset="0.0652" stop-color="#1a0800"/><stop offset="0.0783" stop-color="#210a00"/><stop offset="0.0913" stop-color="#290d00"/><stop offset="0.1043" stop-color="#2f0f00"/><stop offset="0.1174" stop-color="#351100"/><stop offset="0.1304" stop-color="#3c1400"/><stop offset="0.1704" stop-color="#4f1a00"/><stop offset="0.2103" stop-color="#612000"/><stop offset="0.2503" stop-color="#712600"/><stop offset="0.2903" stop-color="#802b00"/><stop offset="0.3302" stop-color="#8e2f00"/><stop offset="0.3702" stop-color="#9b3400"/><stop offset="0.4101" stop-color="#a53700"/><stop offset="0.4501" stop-color="#ae3a00"/><stop offset="0.4900" stop-color="#b43c00"/><stop offset="0.5300" stop-color="#b83d00"/><stop offset="0.5700" stop-color="#bb3e00"/><stop offset="0.6099" stop-color="#bd3f00"/><stop offset="0.6499" stop-color="#be3f00"/><stop offset="1.0000" stop-color="#bf4000"/></linearGradient><linearGradient id="cs9" gradientUnits="userSpaceOnUse" x1="1118.0" y1="652.7" x2="906.5" y2="332.3"><stop offset="0.0000" stop-color="#130600"/><stop offset="0.0130" stop-color="#130600"/><stop offset="0.0261" stop-color="#130600"/><stop offset="0.0391" stop-color="#140600"/><stop offset="0.0522" stop-color="#150600"/><stop offset="0.0652" stop-color="#1a0800"/><stop offset="0.0783" stop-color="#220a00"/><stop offset="0.0913" stop-color="#290d00"/><stop offset="0.1043" stop-color="#2f0f00"/><stop offset="0.1174" stop-color="#361200"/><stop offset="0.1304" stop-color="#3d1400"/><stop offset="0.1703" stop-color="#501b00"/><stop offset="0.2101" stop-color="#612000"/><stop offset="0.2500" stop-color="#722600"/><stop offset="0.2898" stop-color="#812b00"/><stop offset="0.3297" stop-color="#8f3000"/><stop offset="0.3695" stop-color="#9b3400"/><stop offset="0.4094" stop-color="#a53700"/><stop offset="0.4492" stop-color="#ae3a00"/><stop offset="0.4891" stop-color="#b43c00"/><stop offset="0.5289" stop-color="#b83d00"/><stop offset="0.5688" stop-color="#bb3e00"/><stop offset="0.6086" stop-color="#bd3f00"/><stop offset="0.6485" stop-color="#be3f00"/><stop offset="1.0000" stop-color="#bf4000"/></linearGradient><linearGradient id="cs10" gradientUnits="userSpaceOnUse" x1="1126.0" y1="647.1" x2="914.5" y2="326.7"><stop offset="0.0000" stop-color="#130600"/><stop offset="0.0130" stop-color="#130600"/><stop offset="0.0261" stop-color="#130600"/><stop offset="0.0391" stop-color="#140600"/><stop offset="0.0522" stop-color="#150600"/><stop offset="0.0652" stop-color="#1a0800"/><stop offset="0.0783" stop-color="#220b00"/><stop offset="0.0913" stop-color="#290d00"/><stop offset="0.1043" stop-color="#300f00"/><stop offset="0.1174" stop-color="#361200"/><stop offset="0.1304" stop-color="#3d1400"/><stop offset="0.1702" stop-color="#501b00"/><stop offset="0.2099" stop-color="#622100"/><stop offset="0.2497" stop-color="#722600"/><stop offset="0.2894" stop-color="#812b00"/><stop offset="0.3291" stop-color="#8f3000"/><stop offset="0.3689" stop-color="#9b3400"/><stop offset="0.4086" stop-color="#a53700"/><stop offset="0.4484" stop-color="#ae3a00"/><stop offset="0.4881" stop-color="#b43c00"/><stop offset="0.5278" stop-color="#b83d00"/><stop offset="0.5676" stop-color="#bb3e00"/><stop offset="0.6073" stop-color="#bd3f00"/><stop offset="0.6470" stop-color="#be3f00"/><stop offset="1.0000" stop-color="#bf4000"/></linearGradient><linearGradient id="cs11" gradientUnits="userSpaceOnUse" x1="1134.0" y1="641.5" x2="922.5" y2="321.1"><stop offset="0.0000" stop-color="#130600"/><stop offset="0.0130" stop-color="#130600"/><stop offset="0.0261" stop-color="#130600"/><stop offset="0.0391" stop-color="#140600"/><stop offset="0.0522" stop-color="#150600"/><stop offset="0.0652" stop-color="#1b0800"/><stop offset="0.0783" stop-color="#230b00"/><stop offset="0.0913" stop-color="#2a0d00"/><stop offset="0.1043" stop-color="#301000"/><stop offset="0.1174" stop-color="#371200"/><stop offset="0.1304" stop-color="#3e1500"/><stop offset="0.1701" stop-color="#511b00"/><stop offset="0.2097" stop-color="#622100"/><stop offset="0.2493" stop-color="#732600"/><stop offset="0.2890" stop-color="#822b00"/><stop offset="0.3286" stop-color="#903000"/><stop offset="0.3682" stop-color="#9c3400"/><stop offset="0.4079" stop-color="#a63700"/><stop offset="0.4475" stop-color="#ae3a00"/><stop offset="0.4871" stop-color="#b43c00"/><stop offset="0.5267" stop-color="#b83d00"/><stop offset="0.5664" stop-color="#bb3e00"/><stop offset="0.6060" stop-color="#bd3f00"/><stop offset="0.6456" stop-color="#be3f00"/><stop offset="1.0000" stop-color="#bf4000"/></linearGradient><linearGradient id="cs12" gradientUnits="userSpaceOnUse" x1="1142.0" y1="635.9" x2="930.5" y2="315.5"><stop offset="0.0000" stop-color="#130600"/><stop offset="0.0130" stop-color="#130600"/><stop offset="0.0261" stop-color="#130600"/><stop offset="0.0391" stop-color="#140600"/><stop offset="0.0522" stop-color="#150600"/><stop offset="0.0652" stop-color="#1b0800"/><stop offset="0.0783" stop-color="#230b00"/><stop offset="0.0913" stop-color="#2a0d00"/><stop offset="0.1043" stop-color="#311000"/><stop offset="0.1174" stop-color="#381200"/><stop offset="0.1304" stop-color="#3e1500"/><stop offset="0.1700" stop-color="#511b00"/><stop offset="0.2095" stop-color="#632100"/><stop offset="0.2490" stop-color="#742700"/><stop offset="0.2885" stop-color="#822b00"/><stop offset="0.3280" stop-color="#903000"/><stop offset="0.3676" stop-color="#9c3400"/><stop offset="0.4071" stop-color="#a63700"/><stop offset="0.4466" stop-color="#ae3a00"/><stop offset="0.4861" stop-color="#b43c00"/><stop offset="0.5257" stop-color="#b83d00"/><stop offset="0.5652" stop-color="#bb3e00"/><stop offset="0.6047" stop-color="#bd3f00"/><stop offset="0.6442" stop-color="#be3f00"/><stop offset="1.0000" stop-color="#bf4000"/></linearGradient><linearGradient id="cs13" gradientUnits="userSpaceOnUse" x1="1150.0" y1="630.4" x2="938.5" y2="309.9"><stop offset="0.0000" stop-color="#130600"/><stop offset="0.0130" stop-color="#130600"/><stop offset="0.0261" stop-color="#130600"/><stop offset="0.0391" stop-color="#140600"/><stop offset="0.0522" stop-color="#150600"/><stop offset="0.0652" stop-color="#1b0800"/><stop offset="0.0783" stop-color="#240b00"/><stop offset="0.0913" stop-color="#2b0d00"/><stop offset="0.1043" stop-color="#311000"/><stop offset="0.1174" stop-color="#381200"/><stop offset="0.1304" stop-color="#3f1500"/><stop offset="0.1698" stop-color="#521b00"/><stop offset="0.2093" stop-color="#642100"/><stop offset="0.2487" stop-color="#742700"/><stop offset="0.2881" stop-color="#832c00"/><stop offset="0.3275" stop-color="#903000"/><stop offset="0.3669" stop-color="#9c3400"/><stop offset="0.4063" stop-color="#a63700"/><stop offset="0.4457" stop-color="#ae3a00"/><stop offset="0.4852" stop-color="#b43c00"/><stop offset="0.5246" stop-color="#b83d00"/><stop offset="0.5640" stop-color="#bb3e00"/><stop offset="0.6034" stop-color="#bd3f00"/><stop offset="0.6428" stop-color="#be3f00"/><stop offset="1.0000" stop-color="#bf4000"/></linearGradient><linearGradient id="cs14" gradientUnits="userSpaceOnUse" x1="1158.0" y1="624.8" x2="946.5" y2="304.3"><stop offset="0.0000" stop-color="#130600"/><stop offset="0.0130" stop-color="#130600"/><stop offset="0.0261" stop-color="#130600"/><stop offset="0.0391" stop-color="#140600"/><stop offset="0.0522" stop-color="#150600"/><stop offset="0.0652" stop-color="#1c0800"/><stop offset="0.0783" stop-color="#240b00"/><stop offset="0.0913" stop-color="#2b0e00"/><stop offset="0.1043" stop-color="#321000"/><stop offset="0.1174" stop-color="#391300"/><stop offset="0.1304" stop-color="#3f1500"/><stop offset="0.1697" stop-color="#521b00"/><stop offset="0.2090" stop-color="#642100"/><stop offset="0.2483" stop-color="#752700"/><stop offset="0.2877" stop-color="#832c00"/><stop offset="0.3270" stop-color="#913000"/><stop offset="0.3663" stop-color="#9c3400"/><stop offset="0.4056" stop-color="#a63700"/><stop offset="0.4449" stop-color="#ae3a00"/><stop offset="0.4842" stop-color="#b43c00"/><stop offset="0.5235" stop-color="#b83d00"/><stop offset="0.5628" stop-color="#bb3e00"/><stop offset="0.6021" stop-color="#bd3f00"/><stop offset="0.6414" stop-color="#be3f00"/><stop offset="1.0000" stop-color="#bf4000"/></linearGradient><linearGradient id="cs15" gradientUnits="userSpaceOnUse" x1="1166.0" y1="619.2" x2="954.5" y2="298.8"><stop offset="0.0000" stop-color="#130600"/><stop offset="0.0130" stop-color="#130600"/><stop offset="0.0261" stop-color="#130600"/><stop offset="0.0391" stop-color="#140600"/><stop offset="0.0522" stop-color="#150600"/><stop offset="0.0652" stop-color="#1c0800"/><stop offset="0.0783" stop-color="#250b00"/><stop offset="0.0913" stop-color="#2c0e00"/><stop offset="0.1043" stop-color="#321000"/><stop offset="0.1174" stop-color="#391300"/><stop offset="0.1304" stop-color="#401500"/><stop offset="0.1696" stop-color="#531c00"/><stop offset="0.2088" stop-color="#652200"/><stop offset="0.2480" stop-color="#752700"/><stop offset="0.2872" stop-color="#842c00"/><stop offset="0.3264" stop-color="#913000"/><stop offset="0.3656" stop-color="#9d3400"/><stop offset="0.4048" stop-color="#a63700"/><stop offset="0.4440" stop-color="#ae3a00"/><stop offset="0.4832" stop-color="#b43c00"/><stop offset="0.5224" stop-color="#b83d00"/><stop offset="0.5616" stop-color="#bb3e00"/><stop offset="0.6008" stop-color="#bd3f00"/><stop offset="0.6400" stop-color="#be3f00"/><stop offset="1.0000" stop-color="#bf4000"/></linearGradient><linearGradient id="cs16" gradientUnits="userSpaceOnUse" x1="1174.0" y1="613.6" x2="962.5" y2="293.2"><stop offset="0.0000" stop-color="#130600"/><stop offset="0.0130" stop-color="#130600"/><stop offset="0.0261" stop-color="#130600"/><stop offset="0.0391" stop-color="#140600"/><stop offset="0.0522" stop-color="#150600"/><stop offset="0.0652" stop-color="#1c0900"/><stop offset="0.0783" stop-color="#250b00"/><stop offset="0.0913" stop-color="#2c0e00"/><stop offset="0.1043" stop-color="#331000"/><stop offset="0.1174" stop-color="#3a1300"/><stop offset="0.1304" stop-color="#401500"/><stop offset="0.1695" stop-color="#531c00"/><stop offset="0.2086" stop-color="#652200"/><stop offset="0.2477" stop-color="#762700"/><stop offset="0.2868" stop-color="#842c00"/><stop offset="0.3259" stop-color="#923100"/><stop offset="0.3650" stop-color="#9d3400"/><stop offset="0.4040" stop-color="#a63700"/><stop offset="0.4431" stop-color="#ae3a00"/><stop offset="0.4822" stop-color="#b43c00"/><stop offset="0.5213" stop-color="#b83d00"/><stop offset="0.5604" stop-color="#bb3e00"/><stop offset="0.5995" stop-color="#bd3f00"/><stop offset="0.6386" stop-color="#be3f00"/><stop offset="1.0000" stop-color="#bf4000"/></linearGradient><linearGradient id="cs17" gradientUnits="userSpaceOnUse" x1="1182.0" y1="608.0" x2="970.5" y2="287.6"><stop offset="0.0000" stop-color="#130600"/><stop offset="0.0130" stop-color="#130600"/><stop offset="0.0261" stop-color="#130600"/><stop offset="0.0391" stop-color="#140600"/><stop offset="0.0522" stop-color="#160600"/><stop offset="0.0652" stop-color="#1d0900"/><stop offset="0.0783" stop-color="#260c00"/><stop offset="0.0913" stop-color="#2d0e00"/><stop offset="0.1043" stop-color="#331100"/><stop offset="0.1174" stop-color="#3a1300"/><stop offset="0.1304" stop-color="#411600"/><stop offset="0.1694" stop-color="#541c00"/><stop offset="0.2084" stop-color="#662200"/><stop offset="0.2474" stop-color="#762700"/><stop offset="0.2863" stop-color="#852c00"/><stop offset="0.3253" stop-color="#923100"/><stop offset="0.3643" stop-color="#9d3400"/><stop offset="0.4033" stop-color="#a63700"/><stop offset="0.4423" stop-color="#ae3a00"/><stop offset="0.4812" stop-color="#b43c00"/><stop offset="0.5202" stop-color="#b83d00"/><stop offset="0.5592" stop-color="#bb3e00"/><stop offset="0.5982" stop-color="#bd3f00"/><stop offset="0.6372" stop-color="#be3f00"/><stop offset="1.0000" stop-color="#bf4000"/></linearGradient><linearGradient id="cs18" gradientUnits="userSpaceOnUse" x1="1190.0" y1="602.4" x2="978.5" y2="282.0"><stop offset="0.0000" stop-color="#130600"/><stop offset="0.0130" stop-color="#130600"/><stop offset="0.0261" stop-color="#130600"/><stop offset="0.0391" stop-color="#140600"/><stop offset="0.0522" stop-color="#160600"/><stop offset="0.0652" stop-color="#1d0900"/><stop offset="0.0783" stop-color="#260c00"/><stop offset="0.0913" stop-color="#2d0e00"/><stop offset="0.1043" stop-color="#341100"/><stop offset="0.1174" stop-color="#3b1300"/><stop offset="0.1304" stop-color="#411600"/><stop offset="0.1693" stop-color="#541c00"/><stop offset="0.2082" stop-color="#662200"/><stop offset="0.2470" stop-color="#772800"/><stop offset="0.2859" stop-color="#852c00"/><stop offset="0.3248" stop-color="#923100"/><stop offset="0.3637" stop-color="#9d3400"/><stop offset="0.4025" stop-color="#a63700"/><stop offset="0.4414" stop-color="#ae3a00"/><stop offset="0.4803" stop-color="#b43c00"/><stop offset="0.5191" stop-color="#b83d00"/><stop offset="0.5580" stop-color="#bb3e00"/><stop offset="0.5969" stop-color="#bd3f00"/><stop offset="0.6357" stop-color="#be3f00"/><stop offset="1.0000" stop-color="#bf4000"/></linearGradient><linearGradient id="cs19" gradientUnits="userSpaceOnUse" x1="1198.0" y1="596.8" x2="986.5" y2="276.4"><stop offset="0.0000" stop-color="#130600"/><stop offset="0.0130" stop-color="#130600"/><stop offset="0.0261" stop-color="#130600"/><stop offset="0.0391" stop-color="#140600"/><stop offset="0.0522" stop-color="#160600"/><stop offset="0.0652" stop-color="#1e0900"/><stop offset="0.0783" stop-color="#270c00"/><stop offset="0.0913" stop-color="#2e0f00"/><stop offset="0.1043" stop-color="#341100"/><stop offset="0.1174" stop-color="#3b1400"/><stop offset="0.1304" stop-color="#421600"/><stop offset="0.1692" stop-color="#551c00"/><stop offset="0.2080" stop-color="#672200"/><stop offset="0.2467" stop-color="#782800"/><stop offset="0.2855" stop-color="#862d00"/><stop offset="0.3242" stop-color="#933100"/><stop offset="0.3630" stop-color="#9d3400"/><stop offset="0.4018" stop-color="#a63700"/><stop offset="0.4405" stop-color="#ae3a00"/><stop offset="0.4793" stop-color="#b43c00"/><stop offset="0.5180" stop-color="#b83d00"/><stop offset="0.5568" stop-color="#bb3e00"/><stop offset="0.5956" stop-color="#bd3f00"/><stop offset="0.6343" stop-color="#be3f00"/><stop offset="1.0000" stop-color="#bf4000"/></linearGradient><linearGradient id="cs20" gradientUnits="userSpaceOnUse" x1="1206.0" y1="591.2" x2="994.5" y2="270.8"><stop offset="0.0000" stop-color="#130600"/><stop offset="0.0130" stop-color="#130600"/><stop offset="0.0261" stop-color="#130600"/><stop offset="0.0391" stop-color="#140600"/><stop offset="0.0522" stop-color="#160600"/><stop offset="0.0652" stop-color="#1e0900"/><stop offset="0.0783" stop-color="#270c00"/><stop offset="0.0913" stop-color="#2e0f00"/><stop offset="0.1043" stop-color="#351100"/><stop offset="0.1174" stop-color="#3c1400"/><stop offset="0.1304" stop-color="#421600"/><stop offset="0.1691" stop-color="#551c00"/><stop offset="0.2077" stop-color="#682300"/><stop offset="0.2464" stop-color="#782800"/><stop offset="0.2850" stop-color="#862d00"/><stop offset="0.3237" stop-color="#933100"/><stop offset="0.3623" stop-color="#9e3500"/><stop offset="0.4010" stop-color="#a73800"/><stop offset="0.4396" stop-color="#ae3a00"/><stop offset="0.4783" stop-color="#b43c00"/><stop offset="0.5170" stop-color="#b83d00"/><stop offset="0.5556" stop-color="#bb3e00"/><stop offset="0.5943" stop-color="#bd3f00"/><stop offset="0.6329" stop-color="#be3f00"/><stop offset="1.0000" stop-color="#bf4000"/></linearGradient><linearGradient id="cs21" gradientUnits="userSpaceOnUse" x1="1214.0" y1="585.7" x2="1002.5" y2="265.2"><stop offset="0.0000" stop-color="#130600"/><stop offset="0.0130" stop-color="#130600"/><stop offset="0.0261" stop-color="#130600"/><stop offset="0.0391" stop-color="#140600"/><stop offset="0.0522" stop-color="#160700"/><stop offset="0.0652" stop-color="#1f0900"/><stop offset="0.0783" stop-color="#280c00"/><stop offset="0.0913" stop-color="#2f0f00"/><stop offset="0.1043" stop-color="#351100"/><stop offset="0.1174" stop-color="#3c1400"/><stop offset="0.1304" stop-color="#431600"/><stop offset="0.1690" stop-color="#561d00"/><stop offset="0.2075" stop-color="#682300"/><stop offset="0.2461" stop-color="#792800"/><stop offset="0.2846" stop-color="#872d00"/><stop offset="0.3232" stop-color="#933100"/><stop offset="0.3617" stop-color="#9e3500"/><stop offset="0.4002" stop-color="#a73800"/><stop offset="0.4388" stop-color="#ae3a00"/><stop offset="0.4773" stop-color="#b43c00"/><stop offset="0.5159" stop-color="#b83d00"/><stop offset="0.5544" stop-color="#bb3e00"/><stop offset="0.5930" stop-color="#bd3f00"/><stop offset="0.6315" stop-color="#be3f00"/><stop offset="1.0000" stop-color="#bf4000"/></linearGradient><linearGradient id="cs22" gradientUnits="userSpaceOnUse" x1="1222.0" y1="580.1" x2="1010.5" y2="259.6"><stop offset="0.0000" stop-color="#130600"/><stop offset="0.0130" stop-color="#130600"/><stop offset="0.0261" stop-color="#130600"/><stop offset="0.0391" stop-color="#140600"/><stop offset="0.0522" stop-color="#160600"/><stop offset="0.0652" stop-color="#1f0900"/><stop offset="0.0783" stop-color="#280c00"/><stop offset="0.0913" stop-color="#2f0f00"/><stop offset="0.1043" stop-color="#361200"/><stop offset="0.1174" stop-color="#3c1400"/><stop offset="0.1304" stop-color="#431600"/><stop offset="0.1688" stop-color="#561d00"/><stop offset="0.2071" stop-color="#692300"/><stop offset="0.2454" stop-color="#792800"/><stop offset="0.2837" stop-color="#872d00"/><stop offset="0.3220" stop-color="#943100"/><stop offset="0.3603" stop-color="#9e3500"/><stop offset="0.3987" stop-color="#a73800"/><stop offset="0.4370" stop-color="#ae3a00"/><stop offset="0.4753" stop-color="#b43c00"/><stop offset="0.5136" stop-color="#b83d00"/><stop offset="0.5519" stop-color="#bb3e00"/><stop offset="0.5903" stop-color="#bd3f00"/><stop offset="0.6286" stop-color="#be3f00"/><stop offset="1.0000" stop-color="#bf4000"/></linearGradient><linearGradient id="cs23" gradientUnits="userSpaceOnUse" x1="1230.0" y1="574.5" x2="1018.5" y2="254.1"><stop offset="0.0000" stop-color="#130600"/><stop offset="0.0130" stop-color="#130600"/><stop offset="0.0261" stop-color="#130600"/><stop offset="0.0391" stop-color="#140600"/><stop offset="0.0522" stop-color="#150600"/><stop offset="0.0652" stop-color="#1d0900"/><stop offset="0.0783" stop-color="#260c00"/><stop offset="0.0913" stop-color="#2e0e00"/><stop offset="0.1043" stop-color="#351100"/><stop offset="0.1174" stop-color="#3c1400"/><stop offset="0.1304" stop-color="#421600"/><stop offset="0.1682" stop-color="#551c00"/><stop offset="0.2059" stop-color="#682300"/><stop offset="0.2437" stop-color="#792800"/><stop offset="0.2814" stop-color="#872d00"/><stop offset="0.3192" stop-color="#943100"/><stop offset="0.3569" stop-color="#9e3500"/><stop offset="0.3946" stop-color="#a73800"/><stop offset="0.4324" stop-color="#ae3a00"/><stop offset="0.4701" stop-color="#b43c00"/><stop offset="0.5079" stop-color="#b83d00"/><stop offset="0.5456" stop-color="#bb3e00"/><stop offset="0.5834" stop-color="#bd3f00"/><stop offset="0.6211" stop-color="#be3f00"/><stop offset="1.0000" stop-color="#bf4000"/></linearGradient><linearGradient id="cs24" gradientUnits="userSpaceOnUse" x1="1238.0" y1="568.9" x2="1026.5" y2="248.5"><stop offset="0.0000" stop-color="#130600"/><stop offset="0.0130" stop-color="#130600"/><stop offset="0.0261" stop-color="#130600"/><stop offset="0.0391" stop-color="#140600"/><stop offset="0.0522" stop-color="#140600"/><stop offset="0.0652" stop-color="#1b0800"/><stop offset="0.0783" stop-color="#250b00"/><stop offset="0.0913" stop-color="#2c0e00"/><stop offset="0.1043" stop-color="#341100"/><stop offset="0.1174" stop-color="#3b1300"/><stop offset="0.1304" stop-color="#421600"/><stop offset="0.1676" stop-color="#551c00"/><stop offset="0.2048" stop-color="#682300"/><stop offset="0.2419" stop-color="#792800"/><stop offset="0.2791" stop-color="#872d00"/><stop offset="0.3163" stop-color="#943100"/><stop offset="0.3535" stop-color="#9e3500"/><stop offset="0.3906" stop-color="#a73800"/><stop offset="0.4278" stop-color="#ae3a00"/><stop offset="0.4650" stop-color="#b43c00"/><stop offset="0.5022" stop-color="#b73d00"/><stop offset="0.5393" stop-color="#bb3e00"/><stop offset="0.5765" stop-color="#bd3f00"/><stop offset="0.6137" stop-color="#be3f00"/><stop offset="1.0000" stop-color="#bf4000"/></linearGradient><linearGradient id="cs25" gradientUnits="userSpaceOnUse" x1="1246.0" y1="563.3" x2="1034.5" y2="242.9"><stop offset="0.0000" stop-color="#130600"/><stop offset="0.0130" stop-color="#130600"/><stop offset="0.0261" stop-color="#130600"/><stop offset="0.0391" stop-color="#140600"/><stop offset="0.0522" stop-color="#140600"/><stop offset="0.0652" stop-color="#190800"/><stop offset="0.0783" stop-color="#230b00"/><stop offset="0.0913" stop-color="#2b0e00"/><stop offset="0.1043" stop-color="#331000"/><stop offset="0.1174" stop-color="#3a1300"/><stop offset="0.1304" stop-color="#411600"/><stop offset="0.1670" stop-color="#541c00"/><stop offset="0.2036" stop-color="#682300"/><stop offset="0.2402" stop-color="#792800"/><stop offset="0.2768" stop-color="#872d00"/><stop offset="0.3134" stop-color="#943100"/><stop offset="0.3500" stop-color="#9e3500"/><stop offset="0.3866" stop-color="#a73800"/><stop offset="0.4232" stop-color="#ae3a00"/><stop offset="0.4598" stop-color="#b43c00"/><stop offset="0.4964" stop-color="#b73d00"/><stop offset="0.5330" stop-color="#bb3e00"/><stop offset="0.5696" stop-color="#bd3f00"/><stop offset="0.6062" stop-color="#be3f00"/><stop offset="1.0000" stop-color="#bf4000"/></linearGradient><linearGradient id="cs26" gradientUnits="userSpaceOnUse" x1="1254.0" y1="557.7" x2="1042.5" y2="237.3"><stop offset="0.0000" stop-color="#130600"/><stop offset="0.0130" stop-color="#130600"/><stop offset="0.0261" stop-color="#130600"/><stop offset="0.0391" stop-color="#140600"/><stop offset="0.0522" stop-color="#140600"/><stop offset="0.0652" stop-color="#180700"/><stop offset="0.0783" stop-color="#210a00"/><stop offset="0.0913" stop-color="#2a0d00"/><stop offset="0.1043" stop-color="#311000"/><stop offset="0.1174" stop-color="#391300"/><stop offset="0.1304" stop-color="#401500"/><stop offset="0.1665" stop-color="#541c00"/><stop offset="0.2025" stop-color="#682300"/><stop offset="0.2385" stop-color="#792800"/><stop offset="0.2745" stop-color="#872d00"/><stop offset="0.3106" stop-color="#943100"/><stop offset="0.3466" stop-color="#9e3500"/><stop offset="0.3826" stop-color="#a73800"/><stop offset="0.4186" stop-color="#ae3a00"/><stop offset="0.4547" stop-color="#b43c00"/><stop offset="0.4907" stop-color="#b73d00"/><stop offset="0.5267" stop-color="#bb3e00"/><stop offset="0.5627" stop-color="#bd3f00"/><stop offset="0.5988" stop-color="#be3f00"/><stop offset="1.0000" stop-color="#bf4000"/></linearGradient><linearGradient id="cs27" gradientUnits="userSpaceOnUse" x1="1262.0" y1="552.1" x2="1050.5" y2="231.7"><stop offset="0.0000" stop-color="#130600"/><stop offset="0.0130" stop-color="#130600"/><stop offset="0.0261" stop-color="#130600"/><stop offset="0.0391" stop-color="#130600"/><stop offset="0.0522" stop-color="#140600"/><stop offset="0.0652" stop-color="#170700"/><stop offset="0.0783" stop-color="#200a00"/><stop offset="0.0913" stop-color="#290d00"/><stop offset="0.1043" stop-color="#300f00"/><stop offset="0.1174" stop-color="#381200"/><stop offset="0.1304" stop-color="#3f1500"/><stop offset="0.1659" stop-color="#531c00"/><stop offset="0.2013" stop-color="#672200"/><stop offset="0.2368" stop-color="#792800"/><stop offset="0.2722" stop-color="#882d00"/><stop offset="0.3077" stop-color="#943100"/><stop offset="0.3431" stop-color="#9f3500"/><stop offset="0.3786" stop-color="#a73800"/><stop offset="0.4140" stop-color="#ae3a00"/><stop offset="0.4495" stop-color="#b43c00"/><stop offset="0.4849" stop-color="#b73d00"/><stop offset="0.5204" stop-color="#bb3e00"/><stop offset="0.5559" stop-color="#bd3f00"/><stop offset="0.5913" stop-color="#be3f00"/><stop offset="1.0000" stop-color="#bf4000"/></linearGradient><linearGradient id="cs28" gradientUnits="userSpaceOnUse" x1="1270.0" y1="546.5" x2="1058.5" y2="226.1"><stop offset="0.0000" stop-color="#130600"/><stop offset="0.0130" stop-color="#130600"/><stop offset="0.0261" stop-color="#130600"/><stop offset="0.0391" stop-color="#130600"/><stop offset="0.0522" stop-color="#140600"/><stop offset="0.0652" stop-color="#150600"/><stop offset="0.0783" stop-color="#1e0900"/><stop offset="0.0913" stop-color="#270c00"/><stop offset="0.1043" stop-color="#2f0f00"/><stop offset="0.1174" stop-color="#371200"/><stop offset="0.1304" stop-color="#3e1500"/><stop offset="0.1653" stop-color="#521b00"/><stop offset="0.2002" stop-color="#672200"/><stop offset="0.2351" stop-color="#792800"/><stop offset="0.2699" stop-color="#882d00"/><stop offset="0.3048" stop-color="#943100"/><stop offset="0.3397" stop-color="#9f3500"/><stop offset="0.3746" stop-color="#a73800"/><stop offset="0.4095" stop-color="#ae3a00"/><stop offset="0.4443" stop-color="#b43c00"/><stop offset="0.4792" stop-color="#b73d00"/><stop offset="0.5141" stop-color="#bb3e00"/><stop offset="0.5490" stop-color="#bd3f00"/><stop offset="0.5839" stop-color="#be3f00"/><stop offset="1.0000" stop-color="#bf4000"/></linearGradient><linearGradient id="cs29" gradientUnits="userSpaceOnUse" x1="1278.0" y1="541.0" x2="1066.5" y2="220.5"><stop offset="0.0000" stop-color="#130600"/><stop offset="0.0130" stop-color="#130600"/><stop offset="0.0261" stop-color="#130600"/><stop offset="0.0391" stop-color="#130600"/><stop offset="0.0522" stop-color="#140600"/><stop offset="0.0652" stop-color="#150600"/><stop offset="0.0783" stop-color="#1c0800"/><stop offset="0.0913" stop-color="#260c00"/><stop offset="0.1043" stop-color="#2e0f00"/><stop offset="0.1174" stop-color="#361200"/><stop offset="0.1304" stop-color="#3d1400"/><stop offset="0.1647" stop-color="#521b00"/><stop offset="0.1990" stop-color="#672200"/><stop offset="0.2333" stop-color="#792800"/><stop offset="0.2677" stop-color="#882d00"/><stop offset="0.3020" stop-color="#943100"/><stop offset="0.3363" stop-color="#9f3500"/><stop offset="0.3706" stop-color="#a73800"/><stop offset="0.4049" stop-color="#ae3a00"/><stop offset="0.4392" stop-color="#b43c00"/><stop offset="0.4735" stop-color="#b73d00"/><stop offset="0.5078" stop-color="#bb3e00"/><stop offset="0.5421" stop-color="#bd3f00"/><stop offset="0.5764" stop-color="#be3f00"/><stop offset="1.0000" stop-color="#bf4000"/></linearGradient><linearGradient id="cs30" gradientUnits="userSpaceOnUse" x1="1286.0" y1="535.4" x2="1074.5" y2="214.9"><stop offset="0.0000" stop-color="#130600"/><stop offset="0.0130" stop-color="#130600"/><stop offset="0.0261" stop-color="#130600"/><stop offset="0.0391" stop-color="#130600"/><stop offset="0.0522" stop-color="#140600"/><stop offset="0.0652" stop-color="#140600"/><stop offset="0.0783" stop-color="#1a0800"/><stop offset="0.0913" stop-color="#240b00"/><stop offset="0.1043" stop-color="#2d0e00"/><stop offset="0.1174" stop-color="#351100"/><stop offset="0.1304" stop-color="#3d1400"/><stop offset="0.1642" stop-color="#511b00"/><stop offset="0.1979" stop-color="#662200"/><stop offset="0.2316" stop-color="#792800"/><stop offset="0.2654" stop-color="#882d00"/><stop offset="0.2991" stop-color="#953200"/><stop offset="0.3328" stop-color="#9f3500"/><stop offset="0.3666" stop-color="#a73800"/><stop offset="0.4003" stop-color="#ae3a00"/><stop offset="0.4340" stop-color="#b43c00"/><stop offset="0.4677" stop-color="#b73d00"/><stop offset="0.5015" stop-color="#bb3e00"/><stop offset="0.5352" stop-color="#bd3f00"/><stop offset="0.5689" stop-color="#be3f00"/><stop offset="1.0000" stop-color="#bf4000"/></linearGradient><linearGradient id="cs31" gradientUnits="userSpaceOnUse" x1="1294.0" y1="529.8" x2="1082.5" y2="209.4"><stop offset="0.0000" stop-color="#130600"/><stop offset="0.0130" stop-color="#130600"/><stop offset="0.0261" stop-color="#130600"/><stop offset="0.0391" stop-color="#130600"/><stop offset="0.0522" stop-color="#140600"/><stop offset="0.0652" stop-color="#140600"/><stop offset="0.0783" stop-color="#180700"/><stop offset="0.0913" stop-color="#220a00"/><stop offset="0.1043" stop-color="#2b0e00"/><stop offset="0.1174" stop-color="#331100"/><stop offset="0.1304" stop-color="#3c1400"/><stop offset="0.1634" stop-color="#501b00"/><stop offset="0.1963" stop-color="#662200"/><stop offset="0.2293" stop-color="#792800"/><stop offset="0.2622" stop-color="#882d00"/><stop offset="0.2952" stop-color="#953200"/><stop offset="0.3281" stop-color="#9f3500"/><stop offset="0.3610" stop-color="#a83800"/><stop offset="0.3940" stop-color="#af3a00"/><stop offset="0.4269" stop-color="#b43c00"/><stop offset="0.4599" stop-color="#b73d00"/><stop offset="0.4928" stop-color="#bb3e00"/><stop offset="0.5258" stop-color="#bd3f00"/><stop offset="0.5587" stop-color="#be3f00"/><stop offset="1.0000" stop-color="#bf4000"/></linearGradient><linearGradient id="cs32" gradientUnits="userSpaceOnUse" x1="1302.0" y1="524.2" x2="1090.5" y2="203.8"><stop offset="0.0000" stop-color="#130600"/><stop offset="0.0130" stop-color="#130600"/><stop offset="0.0261" stop-color="#130600"/><stop offset="0.0391" stop-color="#130600"/><stop offset="0.0522" stop-color="#140600"/><stop offset="0.0652" stop-color="#140600"/><stop offset="0.0783" stop-color="#160600"/><stop offset="0.0913" stop-color="#1f0a00"/><stop offset="0.1043" stop-color="#290d00"/><stop offset="0.1174" stop-color="#321000"/><stop offset="0.1304" stop-color="#3a1300"/><stop offset="0.1624" stop-color="#501b00"/><stop offset="0.1943" stop-color="#662200"/><stop offset="0.2263" stop-color="#792800"/><stop offset="0.2582" stop-color="#892e00"/><stop offset="0.2901" stop-color="#963200"/><stop offset="0.3221" stop-color="#a03500"/><stop offset="0.3540" stop-color="#a83800"/><stop offset="0.3860" stop-color="#af3a00"/><stop offset="0.4179" stop-color="#b43c00"/><stop offset="0.4498" stop-color="#b83d00"/><stop offset="0.4818" stop-color="#bb3e00"/><stop offset="0.5137" stop-color="#bd3f00"/><stop offset="0.5457" stop-color="#be3f00"/><stop offset="1.0000" stop-color="#bf4000"/></linearGradient><linearGradient id="cs33" gradientUnits="userSpaceOnUse" x1="1310.0" y1="518.6" x2="1098.5" y2="198.2"><stop offset="0.0000" stop-color="#130600"/><stop offset="0.0130" stop-color="#130600"/><stop offset="0.0261" stop-color="#130600"/><stop offset="0.0391" stop-color="#130600"/><stop offset="0.0522" stop-color="#130600"/><stop offset="0.0652" stop-color="#140600"/><stop offset="0.0783" stop-color="#150600"/><stop offset="0.0913" stop-color="#1d0900"/><stop offset="0.1043" stop-color="#270c00"/><stop offset="0.1174" stop-color="#300f00"/><stop offset="0.1304" stop-color="#391300"/><stop offset="0.1614" stop-color="#4f1a00"/><stop offset="0.1923" stop-color="#652200"/><stop offset="0.2232" stop-color="#7a2900"/><stop offset="0.2542" stop-color="#892e00"/><stop offset="0.2851" stop-color="#963200"/><stop offset="0.3161" stop-color="#a13600"/><stop offset="0.3470" stop-color="#a93800"/><stop offset="0.3779" stop-color="#af3a00"/><stop offset="0.4089" stop-color="#b43c00"/><stop offset="0.4398" stop-color="#b83d00"/><stop offset="0.4707" stop-color="#bb3e00"/><stop offset="0.5017" stop-color="#bd3f00"/><stop offset="0.5326" stop-color="#be3f00"/><stop offset="1.0000" stop-color="#bf4000"/></linearGradient><linearGradient id="cs34" gradientUnits="userSpaceOnUse" x1="1318.0" y1="513.0" x2="1106.5" y2="192.6"><stop offset="0.0000" stop-color="#130600"/><stop offset="0.0130" stop-color="#130600"/><stop offset="0.0261" stop-color="#130600"/><stop offset="0.0391" stop-color="#130600"/><stop offset="0.0522" stop-color="#130600"/><stop offset="0.0652" stop-color="#140600"/><stop offset="0.0783" stop-color="#140600"/><stop offset="0.0913" stop-color="#1a0800"/><stop offset="0.1043" stop-color="#250b00"/><stop offset="0.1174" stop-color="#2e0f00"/><stop offset="0.1304" stop-color="#381200"/><stop offset="0.1604" stop-color="#4e1a00"/><stop offset="0.1903" stop-color="#652200"/><stop offset="0.2202" stop-color="#7a2900"/><stop offset="0.2502" stop-color="#8a2e00"/><stop offset="0.2801" stop-color="#973200"/><stop offset="0.3100" stop-color="#a13600"/><stop offset="0.3400" stop-color="#a93800"/><stop offset="0.3699" stop-color="#b03b00"/><stop offset="0.3998" stop-color="#b43c00"/><stop offset="0.4298" stop-color="#b83d00"/><stop offset="0.4597" stop-color="#bb3e00"/><stop offset="0.4896" stop-color="#bd3f00"/><stop offset="0.5196" stop-color="#be3f00"/><stop offset="1.0000" stop-color="#bf4000"/></linearGradient><linearGradient id="cs35" gradientUnits="userSpaceOnUse" x1="1326.0" y1="507.4" x2="1114.5" y2="187.0"><stop offset="0.0000" stop-color="#130600"/><stop offset="0.0130" stop-color="#130600"/><stop offset="0.0261" stop-color="#130600"/><stop offset="0.0391" stop-color="#130600"/><stop offset="0.0522" stop-color="#130600"/><stop offset="0.0652" stop-color="#140600"/><stop offset="0.0783" stop-color="#140600"/><stop offset="0.0913" stop-color="#180700"/><stop offset="0.1043" stop-color="#220a00"/><stop offset="0.1174" stop-color="#2c0e00"/><stop offset="0.1304" stop-color="#361200"/><stop offset="0.1594" stop-color="#4d1a00"/><stop offset="0.1883" stop-color="#652200"/><stop offset="0.2172" stop-color="#7a2900"/><stop offset="0.2462" stop-color="#8a2e00"/><stop offset="0.2751" stop-color="#983300"/><stop offset="0.3040" stop-color="#a23600"/><stop offset="0.3329" stop-color="#aa3900"/><stop offset="0.3619" stop-color="#b03b00"/><stop offset="0.3908" stop-color="#b53c00"/><stop offset="0.4197" stop-color="#b83d00"/><stop offset="0.4487" stop-color="#bb3e00"/><stop offset="0.4776" stop-color="#bd3f00"/><stop offset="0.5065" stop-color="#be3f00"/><stop offset="1.0000" stop-color="#bf4000"/></linearGradient><linearGradient id="cs36" gradientUnits="userSpaceOnUse" x1="1334.0" y1="501.8" x2="1122.5" y2="181.4"><stop offset="0.0000" stop-color="#130600"/><stop offset="0.0130" stop-color="#130600"/><stop offset="0.0261" stop-color="#130600"/><stop offset="0.0391" stop-color="#130600"/><stop offset="0.0522" stop-color="#130600"/><stop offset="0.0652" stop-color="#140600"/><stop offset="0.0783" stop-color="#140600"/><stop offset="0.0913" stop-color="#170700"/><stop offset="0.1043" stop-color="#210a00"/><stop offset="0.1174" stop-color="#2b0e00"/><stop offset="0.1304" stop-color="#351100"/><stop offset="0.1589" stop-color="#4d1a00"/><stop offset="0.1873" stop-color="#652200"/><stop offset="0.2157" stop-color="#7a2900"/><stop offset="0.2441" stop-color="#8b2e00"/><stop offset="0.2726" stop-color="#983300"/><stop offset="0.3010" stop-color="#a23600"/><stop offset="0.3294" stop-color="#aa3900"/><stop offset="0.3579" stop-color="#b03b00"/><stop offset="0.3863" stop-color="#b53c00"/><stop offset="0.4147" stop-color="#b83d00"/><stop offset="0.4431" stop-color="#bb3e00"/><stop offset="0.4716" stop-color="#bd3f00"/><stop offset="0.5000" stop-color="#be3f00"/><stop offset="1.0000" stop-color="#bf4000"/></linearGradient><linearGradient id="cs37" gradientUnits="userSpaceOnUse" x1="1342.0" y1="496.2" x2="1130.5" y2="175.8"><stop offset="0.0000" stop-color="#130600"/><stop offset="0.0130" stop-color="#130600"/><stop offset="0.0261" stop-color="#130600"/><stop offset="0.0391" stop-color="#130600"/><stop offset="0.0522" stop-color="#130600"/><stop offset="0.0652" stop-color="#140600"/><stop offset="0.0783" stop-color="#140600"/><stop offset="0.0913" stop-color="#170700"/><stop offset="0.1043" stop-color="#210a00"/><stop offset="0.1174" stop-color="#2b0e00"/><stop offset="0.1304" stop-color="#351100"/><stop offset="0.1589" stop-color="#4d1a00"/><stop offset="0.1873" stop-color="#652200"/><stop offset="0.2157" stop-color="#7a2900"/><stop offset="0.2441" stop-color="#8b2e00"/><stop offset="0.2726" stop-color="#983300"/><stop offset="0.3010" stop-color="#a23600"/><stop offset="0.3294" stop-color="#aa3900"/><stop offset="0.3579" stop-color="#b03b00"/><stop offset="0.3863" stop-color="#b53c00"/><stop offset="0.4147" stop-color="#b83d00"/><stop offset="0.4431" stop-color="#bb3e00"/><stop offset="0.4716" stop-color="#bd3f00"/><stop offset="0.5000" stop-color="#be3f00"/><stop offset="1.0000" stop-color="#bf4000"/></linearGradient><filter id="blx" color-interpolation-filters="sRGB" filterUnits="userSpaceOnUse" x="820" y="190" width="540" height="520"><feGaussianBlur stdDeviation="4 0"/></filter></defs>
<g filter="url(#blx)"><rect x="829.7" y="200" width="220.6" height="500" fill="url(#cs0)"/><rect x="1049.7" y="200" width="8.6" height="500" fill="url(#cs1)"/><rect x="1057.7" y="200" width="8.6" height="500" fill="url(#cs2)"/><rect x="1065.7" y="200" width="8.6" height="500" fill="url(#cs3)"/><rect x="1073.7" y="200" width="8.6" height="500" fill="url(#cs4)"/><rect x="1081.7" y="200" width="8.6" height="500" fill="url(#cs5)"/><rect x="1089.7" y="200" width="8.6" height="500" fill="url(#cs6)"/><rect x="1097.7" y="200" width="8.6" height="500" fill="url(#cs7)"/><rect x="1105.7" y="200" width="8.6" height="500" fill="url(#cs8)"/><rect x="1113.7" y="200" width="8.6" height="500" fill="url(#cs9)"/><rect x="1121.7" y="200" width="8.6" height="500" fill="url(#cs10)"/><rect x="1129.7" y="200" width="8.6" height="500" fill="url(#cs11)"/><rect x="1137.7" y="200" width="8.6" height="500" fill="url(#cs12)"/><rect x="1145.7" y="200" width="8.6" height="500" fill="url(#cs13)"/><rect x="1153.7" y="200" width="8.6" height="500" fill="url(#cs14)"/><rect x="1161.7" y="200" width="8.6" height="500" fill="url(#cs15)"/><rect x="1169.7" y="200" width="8.6" height="500" fill="url(#cs16)"/><rect x="1177.7" y="200" width="8.6" height="500" fill="url(#cs17)"/><rect x="1185.7" y="200" width="8.6" height="500" fill="url(#cs18)"/><rect x="1193.7" y="200" width="8.6" height="500" fill="url(#cs19)"/><rect x="1201.7" y="200" width="8.6" height="500" fill="url(#cs20)"/><rect x="1209.7" y="200" width="8.6" height="500" fill="url(#cs21)"/><rect x="1217.7" y="200" width="8.6" height="500" fill="url(#cs22)"/><rect x="1225.7" y="200" width="8.6" height="500" fill="url(#cs23)"/><rect x="1233.7" y="200" width="8.6" height="500" fill="url(#cs24)"/><rect x="1241.7" y="200" width="8.6" height="500" fill="url(#cs25)"/><rect x="1249.7" y="200" width="8.6" height="500" fill="url(#cs26)"/><rect x="1257.7" y="200" width="8.6" height="500" fill="url(#cs27)"/><rect x="1265.7" y="200" width="8.6" height="500" fill="url(#cs28)"/><rect x="1273.7" y="200" width="8.6" height="500" fill="url(#cs29)"/><rect x="1281.7" y="200" width="8.6" height="500" fill="url(#cs30)"/><rect x="1289.7" y="200" width="8.6" height="500" fill="url(#cs31)"/><rect x="1297.7" y="200" width="8.6" height="500" fill="url(#cs32)"/><rect x="1305.7" y="200" width="8.6" height="500" fill="url(#cs33)"/><rect x="1313.7" y="200" width="8.6" height="500" fill="url(#cs34)"/><rect x="1321.7" y="200" width="8.6" height="500" fill="url(#cs35)"/><rect x="1329.7" y="200" width="8.6" height="500" fill="url(#cs36)"/><rect x="1337.7" y="200" width="8.6" height="500" fill="url(#cs37)"/></g>
</g>
<defs><linearGradient id="gTopDk" gradientUnits="userSpaceOnUse" x1="865" y1="389" x2="885" y2="417.7"><stop offset="0" stop-color="#000" stop-opacity=".24"/><stop offset=".5" stop-color="#000" stop-opacity=".09"/><stop offset="1" stop-color="#000" stop-opacity="0"/></linearGradient>
<linearGradient id="gRingDk" gradientUnits="userSpaceOnUse" x1="1200" y1="300" x2="1340" y2="500"><stop offset="0" stop-color="#000" stop-opacity=".05"/><stop offset="1" stop-color="#000" stop-opacity=".3"/></linearGradient></defs>
<path d="M1132.5 212.5 C1136.7 212.9 1146.2 211.5 1157.5 215.0 C1168.8 218.5 1186.7 226.1 1200.0 233.8 C1213.3 241.4 1225.0 249.5 1237.5 261.0 C1250.0 272.5 1264.6 290.0 1275.0 302.5 C1285.4 315.0 1292.9 324.8 1300.0 336.0 C1307.1 347.2 1312.5 358.5 1317.5 370.0 C1322.5 381.5 1326.9 393.8 1330.0 405.0 C1333.1 416.2 1335.0 427.9 1336.0 437.5 C1337.0 447.1 1337.0 454.2 1336.0 462.5 C1335.0 470.8 1332.8 479.6 1330.0 487.5 C1327.2 495.4 1324.0 503.6 1319.0 510.0 C1314.0 516.4 1303.2 523.3 1300.0 526.0 L1317.5 510.0 C1318.9 506.2 1324.1 495.0 1326.0 487.5 C1327.9 480.0 1329.0 473.8 1329.0 465.0 C1329.0 456.2 1327.9 446.2 1326.0 435.0 C1324.1 423.8 1321.8 410.0 1317.5 397.5 C1313.2 385.0 1307.1 372.9 1300.0 360.0 C1292.9 347.1 1285.4 334.2 1275.0 320.0 C1264.6 305.8 1250.0 287.7 1237.5 275.0 C1225.0 262.3 1212.5 252.5 1200.0 244.0 C1187.5 235.5 1175.0 228.7 1162.5 224.0 C1150.0 219.3 1131.2 217.3 1125.0 216.0 L1132.5 212.5Z" fill="url(#gRingDk)"/>
<clipPath id="ringclip"><path d="M1132.5 212.5 C1136.7 212.9 1146.2 211.5 1157.5 215.0 C1168.8 218.5 1186.7 226.1 1200.0 233.8 C1213.3 241.4 1225.0 249.5 1237.5 261.0 C1250.0 272.5 1264.6 290.0 1275.0 302.5 C1285.4 315.0 1292.9 324.8 1300.0 336.0 C1307.1 347.2 1312.5 358.5 1317.5 370.0 C1322.5 381.5 1326.9 393.8 1330.0 405.0 C1333.1 416.2 1335.0 427.9 1336.0 437.5 C1337.0 447.1 1337.0 454.2 1336.0 462.5 C1335.0 470.8 1332.8 479.6 1330.0 487.5 C1327.2 495.4 1324.0 503.6 1319.0 510.0 C1314.0 516.4 1303.2 523.3 1300.0 526.0 L1317.5 510.0 C1318.9 506.2 1324.1 495.0 1326.0 487.5 C1327.9 480.0 1329.0 473.8 1329.0 465.0 C1329.0 456.2 1327.9 446.2 1326.0 435.0 C1324.1 423.8 1321.8 410.0 1317.5 397.5 C1313.2 385.0 1307.1 372.9 1300.0 360.0 C1292.9 347.1 1285.4 334.2 1275.0 320.0 C1264.6 305.8 1250.0 287.7 1237.5 275.0 C1225.0 262.3 1212.5 252.5 1200.0 244.0 C1187.5 235.5 1175.0 228.7 1162.5 224.0 C1150.0 219.3 1131.2 217.3 1125.0 216.0 L1132.5 212.5Z"/></clipPath>
<g clip-path="url(#ringclip)" fill="none" stroke="#1a0800"><path d="M1132.5 212.5 C1136.7 212.9 1146.2 211.5 1157.5 215.0 C1168.8 218.5 1186.7 226.1 1200.0 233.8 C1213.3 241.4 1225.0 249.5 1237.5 261.0 C1250.0 272.5 1264.6 290.0 1275.0 302.5 C1285.4 315.0 1292.9 324.8 1300.0 336.0 C1307.1 347.2 1312.5 358.5 1317.5 370.0 C1322.5 381.5 1326.9 393.8 1330.0 405.0 C1333.1 416.2 1335.0 427.9 1336.0 437.5 C1337.0 447.1 1337.0 454.2 1336.0 462.5 C1335.0 470.8 1332.8 479.6 1330.0 487.5 C1327.2 495.4 1324.0 503.6 1319.0 510.0 C1314.0 516.4 1303.2 523.3 1300.0 526.0" stroke-width="11" stroke-opacity=".22"/><path d="M1132.5 212.5 C1136.7 212.9 1146.2 211.5 1157.5 215.0 C1168.8 218.5 1186.7 226.1 1200.0 233.8 C1213.3 241.4 1225.0 249.5 1237.5 261.0 C1250.0 272.5 1264.6 290.0 1275.0 302.5 C1285.4 315.0 1292.9 324.8 1300.0 336.0 C1307.1 347.2 1312.5 358.5 1317.5 370.0 C1322.5 381.5 1326.9 393.8 1330.0 405.0 C1333.1 416.2 1335.0 427.9 1336.0 437.5 C1337.0 447.1 1337.0 454.2 1336.0 462.5 C1335.0 470.8 1332.8 479.6 1330.0 487.5 C1327.2 495.4 1324.0 503.6 1319.0 510.0 C1314.0 516.4 1303.2 523.3 1300.0 526.0" stroke-width="6" stroke-opacity=".3"/></g>
<path d="M865.0 388.8 L1023.3 275.8 L1025.4 264.0 C1027.9 262.4 1035.2 256.9 1040.4 254.3 C1045.6 251.7 1052.0 249.0 1056.5 248.4 C1061.0 247.8 1064.4 250.4 1067.2 250.6 C1070.0 250.8 1072.5 249.7 1073.6 249.5 L1123.0 216.3 L1125.0 216.0 C1131.2 217.3 1150.0 219.3 1162.5 224.0 C1175.0 228.7 1187.5 235.5 1200.0 244.0 C1212.5 252.5 1225.0 262.3 1237.5 275.0 C1250.0 287.7 1264.6 305.8 1275.0 320.0 C1285.4 334.2 1292.9 347.1 1300.0 360.0 C1307.1 372.9 1313.2 385.0 1317.5 397.5 C1321.8 410.0 1324.1 423.8 1326.0 435.0 C1327.9 446.2 1329.0 456.2 1329.0 465.0 C1329.0 473.8 1327.9 480.0 1326.0 487.5 C1324.1 495.0 1318.9 506.2 1317.5 510.0 L1300.0 526.0 L1240.0 567.5 L1077.5 681.0 L1025.0 697.1 L1053.1 696.4 L1077.5 682.5 L1087.5 652.5 L1090.0 620.0 L1084.0 585.0 L1065.0 532.5 L1030.0 472.5 L1005.0 450.0 L980.0 426.0 L955.0 407.5 L922.5 391.0 L890.8 384.0 L863.9 388.7Z" fill="url(#gTopDk)"/>
<path d="M863.9 388.7 L890.8 384.0 L922.5 391.0 L955.0 407.5 L980.0 426.0 L1005.0 450.0 L1030.0 472.5 L1065.0 532.5 L1084.0 585.0 L1090.0 620.0 L1087.5 652.5 L1077.5 682.5 L1053.1 696.4 L1025.0 697.1 L995.3 689.0 L958.2 665.2 L935.0 642.5 L905.0 610.0 L870.0 562.5 L849.0 520.0 L836.0 477.5 L834.6 455.0 L834.2 436.6 L838.6 424.3 L844.1 407.7 L863.9 388.7Z M912.5 456.0 L936.0 457.0 L965.0 472.5 L992.5 496.0 L1012.5 525.0 L1027.5 557.5 L1033.0 590.0 L1029.0 612.5 L1012.5 626.0 L989.0 625.0 L959.0 610.0 L932.5 585.0 L910.0 550.0 L896.0 515.0 L892.0 492.5 L897.5 470.0 L912.5 456.0Z" fill="#802b00" fill-rule="evenodd"/>
<path d="M912.5 456.0 L936.0 457.0 L965.0 472.5 L992.5 496.0 L1012.5 525.0 L1027.5 557.5 L1033.0 590.0 L1029.0 612.5 L1012.5 626.0 L989.0 625.0 L959.0 610.0 L932.5 585.0 L910.0 550.0 L896.0 515.0 L892.0 492.5 L897.5 470.0 L912.5 456.0Z" fill="url(#gBore)"/>
<path d="M656.0 312.0 L476.0 440.0 C471.2 443.1 455.2 452.5 447.5 458.8 C439.8 465.0 434.0 471.0 430.0 477.5 C426.0 484.0 424.4 490.8 423.8 497.5 C423.1 504.2 424.0 511.2 426.0 517.5 C428.0 523.8 432.4 530.2 436.0 535.0 C439.6 539.8 445.6 544.2 447.5 546.0 L930.0 886.8 C935.0 889.0 948.8 897.8 960.0 900.5 C971.2 903.2 985.8 903.8 997.5 903.0 C1009.2 902.2 1021.1 898.2 1030.0 895.5 C1038.9 892.8 1047.5 888.2 1051.0 886.8 L1309.0 704.0 C1311.0 705.8 1317.9 710.2 1321.0 715.0 C1324.1 719.8 1326.4 729.6 1327.5 732.5 L1328.0 766.0 M395.5 535.0 C397.1 538.8 401.3 551.5 405.0 557.5 C408.7 563.5 413.7 567.2 417.5 571.0 C421.3 574.8 426.2 578.5 428.0 580.0 L911.0 919.5 C916.2 922.2 930.2 931.5 942.5 935.5 C954.8 939.5 971.7 942.5 985.0 943.5 C998.3 944.5 1011.7 943.5 1022.5 941.8 C1033.3 940.0 1041.9 936.8 1050.0 933.0 C1058.1 929.2 1067.5 921.3 1071.0 919.0 L1327.5 732.5 M433.8 456.0 C435.0 456.0 438.7 455.5 441.0 456.0 C443.3 456.5 446.4 458.3 447.5 458.8 M447.5 546.0 C445.2 548.3 437.1 554.3 434.0 560.0 C430.9 565.7 429.9 572.3 429.0 580.0 C428.1 587.7 428.6 601.7 428.5 606.0 M930.0 886.8 C927.5 889.8 918.2 899.5 915.0 905.0 C911.8 910.5 911.5 912.4 910.8 919.5 C910.0 926.6 910.5 942.8 910.5 947.5 M1051.0 886.8 C1053.3 889.0 1061.7 895.1 1065.0 900.5 C1068.3 905.9 1069.8 911.5 1071.0 919.0 C1072.2 926.5 1072.2 941.1 1072.5 945.5 M1309.0 704.0 L1322.5 699.5 M1251.0 664.0 L1309.0 704.0 M1251.0 664.0 L1261.0 659.5 M1232.5 571.0 L1232.5 629.0 C1233.1 631.7 1232.9 639.2 1236.0 645.0 C1239.1 650.8 1248.5 660.8 1251.0 664.0 L1057.5 802.5 M1232.5 629.0 L1035.0 769.0 M957.5 726.0 C954.2 728.8 942.2 736.4 937.5 742.5 C932.8 748.6 930.1 755.8 929.5 762.5 C928.9 769.2 930.3 775.8 933.8 782.5 C937.2 789.2 942.7 797.1 950.0 802.5 C957.3 807.9 966.7 812.4 977.5 815.0 C988.3 817.6 1004.6 818.4 1015.0 818.0 C1025.4 817.6 1032.9 815.1 1040.0 812.5 C1047.1 809.9 1054.6 804.2 1057.5 802.5 M1035.0 769.0 C1036.7 772.5 1041.2 784.4 1045.0 790.0 C1048.8 795.6 1055.4 800.4 1057.5 802.5 M987.5 778.8 L977.5 815.0 M1009.5 778.8 L1013.0 818.0 M957.5 665.0 L957.5 747.5 C959.2 750.8 962.1 762.8 967.5 767.5 C972.9 772.2 982.1 774.6 990.0 776.0 C997.9 777.4 1007.5 777.2 1015.0 776.0 C1022.5 774.8 1031.7 770.2 1035.0 769.0 L1035.0 697.5 M1077.5 681.0 L1240.0 567.5 M656.0 312.0 L834.0 436.0 M676.0 284.0 L851.0 400.0 M685.5 282.6 L1025.0 265.5 M706.0 241.0 L1032.9 226.4 M702.0 238.0 L1125.0 216.0 M1032.9 226.4 C1035.9 226.7 1046.1 226.6 1051.1 228.0 C1056.1 229.4 1059.9 232.8 1062.9 235.0 C1065.9 237.2 1067.5 239.0 1069.3 241.4 C1071.1 243.8 1072.9 248.2 1073.6 249.5 M1032.9 226.4 C1031.5 228.2 1026.1 233.3 1024.3 237.2 C1022.5 241.1 1022.2 245.5 1022.2 250.0 C1022.2 254.5 1024.1 259.7 1024.3 264.0 C1024.5 268.3 1023.5 273.8 1023.3 275.8 M1025.4 264.0 C1027.9 262.4 1035.2 256.9 1040.4 254.3 C1045.6 251.7 1052.0 249.0 1056.5 248.4 C1061.0 247.8 1064.4 250.4 1067.2 250.6 C1070.0 250.8 1072.5 249.7 1073.6 249.5 M1073.6 249.5 L1123.0 216.3 M640.0 308.0 C641.3 308.1 645.3 307.8 648.0 308.5 C650.7 309.2 654.7 311.4 656.0 312.0 M656.0 312.0 C658.0 309.7 664.7 302.7 668.0 298.0 C671.3 293.3 674.7 286.3 676.0 284.0 M676.0 284.0 C677.0 283.8 680.4 283.2 682.0 283.0 C683.6 282.8 684.9 282.7 685.5 282.6 M688.8 282.6 C688.4 280.9 687.1 275.4 686.6 272.2 C686.1 269.0 685.1 267.1 686.0 263.5 C686.9 259.9 689.4 253.8 692.0 250.5 C694.6 247.2 699.5 245.0 701.8 243.4 C704.1 241.8 705.3 241.4 706.0 241.0 M685.5 282.6 C685.0 280.9 682.8 275.4 682.2 272.2 C681.6 269.0 680.6 267.5 681.7 263.5 C682.8 259.5 685.8 252.3 688.8 248.3 C691.8 244.3 697.2 241.3 699.6 239.6 C702.0 237.9 702.4 238.3 703.0 238.0 M665.9 278.8 L674.0 288.0 M863.9 388.7 L890.8 384.0 L922.5 391.0 L955.0 407.5 L980.0 426.0 L1005.0 450.0 L1030.0 472.5 L1065.0 532.5 L1084.0 585.0 L1090.0 620.0 L1087.5 652.5 L1077.5 682.5 L1053.1 696.4 L1025.0 697.1 L995.3 689.0 L958.2 665.2 L935.0 642.5 L905.0 610.0 L870.0 562.5 L849.0 520.0 L836.0 477.5 L834.6 455.0 L834.2 436.6 L838.6 424.3 L844.1 407.7 L863.9 388.7 M912.5 456.0 L936.0 457.0 L965.0 472.5 L992.5 496.0 L1012.5 525.0 L1027.5 557.5 L1033.0 590.0 L1029.0 612.5 L1012.5 626.0 L989.0 625.0 L959.0 610.0 L932.5 585.0 L910.0 550.0 L896.0 515.0 L892.0 492.5 L897.5 470.0 L912.5 456.0Z M1125.0 216.0 C1131.2 217.3 1150.0 219.3 1162.5 224.0 C1175.0 228.7 1187.5 235.5 1200.0 244.0 C1212.5 252.5 1225.0 262.3 1237.5 275.0 C1250.0 287.7 1264.6 305.8 1275.0 320.0 C1285.4 334.2 1292.9 347.1 1300.0 360.0 C1307.1 372.9 1313.2 385.0 1317.5 397.5 C1321.8 410.0 1324.1 423.8 1326.0 435.0 C1327.9 446.2 1329.0 456.2 1329.0 465.0 C1329.0 473.8 1327.9 480.0 1326.0 487.5 C1324.1 495.0 1318.9 506.2 1317.5 510.0" fill="none" stroke="#1a0800" stroke-width="1.25" stroke-linejoin="round" stroke-linecap="round"/>
<path d="M1023.3 275.8 L865.0 388.8 M1023.3 275.8 C1025.2 274.0 1030.4 268.4 1035.0 265.0 C1039.6 261.6 1046.3 257.7 1051.0 255.4 C1055.7 253.1 1061.0 251.7 1063.0 251.0" fill="none" stroke="#1c0900" stroke-width=".8" stroke-dasharray="2 1.2"/>
<linearGradient id="gHoleAw" gradientUnits="userSpaceOnUse" x1="468.4" y1="0" x2="548.4" y2="0"><stop offset="0" stop-color="#1a0800"/><stop offset=".3" stop-color="#4e1a00"/><stop offset=".6" stop-color="#762700"/><stop offset="1" stop-color="#8e2f00"/></linearGradient>
<linearGradient id="gHoleAs" gradientUnits="userSpaceOnUse" x1="490.4" y1="0" x2="526.4" y2="0"><stop offset="0" stop-color="#1a0800"/><stop offset=".35" stop-color="#521b00"/><stop offset=".7" stop-color="#7e2a00"/><stop offset="1" stop-color="#a03500"/></linearGradient>
<clipPath id="gHoleAc"><path d="M468.1 494.4 L478.7 481.0 L497.7 473.1 L519.9 473.1 L537.3 481.0 L548.8 494.4 L548.8 507.5 L537.7 523.3 L520.7 530.0 L496.5 530.0 L479.1 523.3 L468.5 509.1Z"/></clipPath>
<path d="M468.1 494.4 L478.7 481.0 L497.7 473.1 L519.9 473.1 L537.3 481.0 L548.8 494.4 L548.8 507.5 L537.7 523.3 L520.7 530.0 L496.5 530.0 L479.1 523.3 L468.5 509.1Z" fill="url(#gHoleAw)"/>
<g clip-path="url(#gHoleAc)"><path d="M468.1 511.1 L478.7 497.7 L497.7 489.8 L519.9 489.8 L537.3 497.7 L548.8 511.1 L548.8 524.2 L537.7 540.0 L520.7 546.7 L496.5 546.7 L479.1 540.0 L468.5 525.8Z" fill="#c04000" stroke="#1c0900" stroke-width="1.4"/></g>
<path d="M490.2 515.4 L495.4 508.3 L503.3 505.5 L513.6 505.5 L522.3 509.1 L527.0 515.4 L526.6 522.5 L520.7 530.0 L496.5 530.0 L490.6 522.5Z" fill="url(#gHoleAs)" stroke="#1c0900" stroke-width="1.4" stroke-linejoin="round"/>
<path d="M468.1 494.4 L478.7 481.0 L497.7 473.1 L519.9 473.1 L537.3 481.0 L548.8 494.4 L548.8 507.5 L537.7 523.3 L520.7 530.0 L496.5 530.0 L479.1 523.3 L468.5 509.1Z" fill="none" stroke="#1c0900" stroke-width="1.4" stroke-linejoin="round"/>
<linearGradient id="gHoleBw" gradientUnits="userSpaceOnUse" x1="951.1" y1="0" x2="1031.1" y2="0"><stop offset="0" stop-color="#1a0800"/><stop offset=".3" stop-color="#4e1a00"/><stop offset=".6" stop-color="#762700"/><stop offset="1" stop-color="#8e2f00"/></linearGradient>
<linearGradient id="gHoleBs" gradientUnits="userSpaceOnUse" x1="973.1" y1="0" x2="1009.1" y2="0"><stop offset="0" stop-color="#1a0800"/><stop offset=".35" stop-color="#521b00"/><stop offset=".7" stop-color="#7e2a00"/><stop offset="1" stop-color="#a03500"/></linearGradient>
<clipPath id="gHoleBc"><path d="M950.8 835.9 L961.4 822.5 L980.4 814.6 L1002.6 814.6 L1020.0 822.5 L1031.5 835.9 L1031.5 849.0 L1020.4 864.8 L1003.4 871.5 L979.2 871.5 L961.8 864.8 L951.2 850.6Z"/></clipPath>
<path d="M950.8 835.9 L961.4 822.5 L980.4 814.6 L1002.6 814.6 L1020.0 822.5 L1031.5 835.9 L1031.5 849.0 L1020.4 864.8 L1003.4 871.5 L979.2 871.5 L961.8 864.8 L951.2 850.6Z" fill="url(#gHoleBw)"/>
<g clip-path="url(#gHoleBc)"><path d="M950.8 852.6 L961.4 839.2 L980.4 831.3 L1002.6 831.3 L1020.0 839.2 L1031.5 852.6 L1031.5 865.7 L1020.4 881.5 L1003.4 888.2 L979.2 888.2 L961.8 881.5 L951.2 867.3Z" fill="#c04000" stroke="#1c0900" stroke-width="1.4"/></g>
<path d="M972.9 856.9 L978.1 849.8 L986.0 847.0 L996.3 847.0 L1005.0 850.6 L1009.7 856.9 L1009.3 864.0 L1003.4 871.5 L979.2 871.5 L973.3 864.0Z" fill="url(#gHoleBs)" stroke="#1c0900" stroke-width="1.4" stroke-linejoin="round"/>
<path d="M950.8 835.9 L961.4 822.5 L980.4 814.6 L1002.6 814.6 L1020.0 822.5 L1031.5 835.9 L1031.5 849.0 L1020.4 864.8 L1003.4 871.5 L979.2 871.5 L961.8 864.8 L951.2 850.6Z" fill="none" stroke="#1c0900" stroke-width="1.4" stroke-linejoin="round"/>
<path d="M715.0 234.5 L1132.5 212.5 C1136.7 212.9 1146.2 211.5 1157.5 215.0 C1168.8 218.5 1186.7 226.1 1200.0 233.8 C1213.3 241.4 1225.0 249.5 1237.5 261.0 C1250.0 272.5 1264.6 290.0 1275.0 302.5 C1285.4 315.0 1292.9 324.8 1300.0 336.0 C1307.1 347.2 1312.5 358.5 1317.5 370.0 C1322.5 381.5 1326.9 393.8 1330.0 405.0 C1333.1 416.2 1335.0 427.9 1336.0 437.5 C1337.0 447.1 1337.0 454.2 1336.0 462.5 C1335.0 470.8 1332.8 479.6 1330.0 487.5 C1327.2 495.4 1324.0 503.6 1319.0 510.0 C1314.0 516.4 1303.2 523.3 1300.0 526.0 L1240.0 567.5 C1240.0 575.4 1238.8 603.8 1240.0 615.0 C1241.2 626.2 1244.2 628.5 1247.5 635.0 C1250.8 641.5 1255.4 648.6 1260.0 653.8 C1264.6 658.9 1272.5 664.0 1275.0 666.0 L1322.5 700.0 C1323.9 701.2 1328.8 704.2 1331.0 707.5 C1333.2 710.8 1335.2 712.1 1336.0 720.0 C1336.8 727.9 1337.2 747.3 1336.0 755.0 C1334.8 762.7 1330.2 764.2 1329.0 766.0 L1072.5 945.5 C1067.9 948.2 1055.4 957.8 1045.0 962.0 C1034.6 966.2 1021.7 969.1 1010.0 970.5 C998.3 971.9 986.9 971.9 975.0 970.5 C963.1 969.1 949.5 965.8 938.7 962.0 C927.9 958.2 915.0 950.2 910.2 947.8 L428.8 606.5 L406.6 586.0 L395.3 561.6 L395.3 535.3 C395.4 532.8 394.4 527.2 395.8 520.0 C397.2 512.8 399.8 500.7 403.8 492.0 C407.8 483.3 412.6 475.4 419.8 467.6 C427.0 459.8 439.0 451.3 447.0 445.0 C455.0 438.7 464.2 432.5 467.7 430.0 L640.0 308.0 C642.5 305.8 650.8 300.1 655.0 295.0 C659.2 289.9 662.1 282.9 665.0 277.5 C667.9 272.1 669.6 267.3 672.5 262.5 C675.4 257.7 678.3 252.6 682.5 248.8 C686.7 244.9 692.1 241.9 697.5 239.5 C702.9 237.1 712.1 235.3 715.0 234.5 Z" fill="none" stroke="#1a0800" stroke-width="1.8" stroke-linejoin="round"/>
</g>
</svg>
<svg class="a" style="left:0;top:0" width="1679" height="1011" viewBox="0 0 1679 1011">
<!-- ===== title bar icons ===== -->
<!-- logo -->
<g fill="none" stroke="#d52b2b" stroke-linecap="round" stroke-linejoin="round">
 <path d="M26.2 2 C30.500 1.400 36 2.600 36.800 5.600 C37.400 8.600 32 11.500 27.500 13.200" stroke-width="1.700"/>
 <path d="M19.800 14.800 L29.300 14.300 M29.200 13.600 L16.800 27 M29.300 14.300 C32.500 15.500 33 18.500 30.500 21 C27.500 24 21.500 26.200 16.800 27" stroke-width="1.800"/>
 <path d="M43 10.900 C39.500 10.900 36 11.300 34.800 12.400 C33.500 13.800 34.200 15.400 36.500 16.600 C39.500 18.200 41.500 19.300 41 21.300 C40.500 23.500 36.500 24.500 32.300 24.600" stroke-width="2.300"/>
</g>
<text x="49" y="24.600" font-family="Liberation Sans, sans-serif" font-size="13.800" font-weight="bold" font-style="italic" fill="#d52b2b" stroke="#d52b2b" stroke-width=".5" textLength="48.300" lengthAdjust="spacingAndGlyphs">SOLID</text>
<text x="97.600" y="24.600" font-family="Liberation Sans, sans-serif" font-size="13.800" font-style="italic" fill="#d52b2b" textLength="50.200" lengthAdjust="spacingAndGlyphs">WORKS</text>
<!-- pin -->
<g transform="translate(491,9)" fill="#2f7fb5" stroke="none"><path d="M8.5 0.5 L13 5 L11.5 6 L10.8 5.6 L8.2 8.4 L8.4 11 L7.4 12 L4.6 9.2 L1 13.2 L0.4 12.8 L4 8.6 L1.2 5.8 L2.2 4.8 L4.8 5 L7.6 2.4 L7.2 1.6 Z"/></g>
<!-- home -->
<g transform="translate(531,6)"><path d="M3 9.5 L3 18.5 L16 18.5 L16 9.5 L9.5 3.5 Z" fill="#fff" stroke="#333" stroke-width="1.2"/><rect x="7.6" y="12" width="4" height="6.5" fill="#fff" stroke="#333" stroke-width="1"/><path d="M0.5 10.5 L9.5 1.5 L18.5 10.5" fill="none" stroke="#2a6f97" stroke-width="2.4" stroke-linejoin="miter"/></g>
<!-- new -->
<g transform="translate(559,7)"><path d="M1 0.8 L8.5 0.8 L13 5.2 L13 17.2 L1 17.2 Z" fill="#fafafa" stroke="#333" stroke-width="1.2" stroke-linejoin="round"/><path d="M8.5 0.8 L8.5 5.2 L13 5.2" fill="#ddd" stroke="#333" stroke-width="1"/></g>
<!-- open -->
<g transform="translate(594,7)"><path d="M1 3.5 L6 3.5 L7.5 5.5 L15 5.5 L15 17 L1 17 Z" fill="#e9e9e9" stroke="#333" stroke-width="1.1" stroke-linejoin="round"/><path d="M1 17 L5 8.5 L20 8.5 L15.5 17 Z" fill="#f4f4f4" stroke="#333" stroke-width="1.1" stroke-linejoin="round"/><path d="M7 1 C11 0.5 13.5 2 14 5 L16.5 5 L13 9.5 L9.5 5 L11.6 5 C11.2 3.4 9.8 2.4 7 2.6 Z" fill="#2ea02e" stroke="#1b6e1b" stroke-width=".6"/></g>
<!-- save -->
<g transform="translate(636,7)"><path d="M1 1 L12.5 1 L14.5 3 L14.5 14.5 L1 14.5 Z" fill="#2f6f95" stroke="#1d4c68" stroke-width="1"/><rect x="3.6" y="1.5" width="7.6" height="5" fill="#e9eef2"/><rect x="8.3" y="2.2" width="1.8" height="3.4" fill="#2f6f95"/><rect x="3.4" y="8.8" width="8.4" height="5.7" fill="#d7e0e6"/><path d="M11.5 8 L17 17.5 L6 17.5 Z" fill="#f6c21c" stroke="#8a6a00" stroke-width=".8" stroke-linejoin="round"/><rect x="11" y="11" width="1.2" height="3.6" fill="#222"/><rect x="11" y="15.2" width="1.2" height="1.2" fill="#222"/></g>
<!-- print -->
<g transform="translate(674,7)"><rect x="4" y=".8" width="10.5" height="7" fill="#fff" stroke="#444" stroke-width="1"/><path d="M1 7.5 L17.5 7.5 L18 14.5 L.5 14.5 Z" fill="#2f6f95" stroke="#1d4c68" stroke-width="1"/><rect x="3.5" y="11.5" width="11.5" height="6" fill="#fff" stroke="#444" stroke-width="1"/><path d="M5 13.8h8.5M5 15.6h8.5" stroke="#777" stroke-width=".8"/><rect x="2.3" y="9" width="14" height="1.3" fill="#7fb4d4"/></g>
<!-- undo (disabled) -->
<g transform="translate(712,8)"><path d="M1 5.5 L7 1 L7 3.8 C12.5 3.6 16 6.5 15.5 11.5 C15.2 13.5 14.2 14.8 13 15.6 C13.6 12.5 12 9 7 8.6 L7 11.6 Z" fill="#cfcfcf" stroke="#bdbdbd" stroke-width=".8" stroke-linejoin="round"/></g>
<!-- select -->
<rect x="748.5" y="3.5" width="26" height="25" fill="#b9b9b9" stroke="#8d8d8d" stroke-width="1"/>
<rect x="774.5" y="3.5" width="13" height="25" fill="#fbfbfb" stroke="#b3b3b3" stroke-width="1"/>
<path d="M755.5 7.5 L755.5 22.5 L759.3 19 L762 25 L764.3 24 L761.6 18.2 L766.5 18 Z" fill="#fff" stroke="#222" stroke-width="1.1" stroke-linejoin="round"/>
<!-- traffic light -->
<g transform="translate(795.5,7)"><rect x="0" y="0" width="10.5" height="18" rx="5" fill="#2b2b2b"/><circle cx="5.25" cy="5" r="3" fill="#e02a1a"/><circle cx="5.25" cy="12.8" r="3" fill="#3db53d"/><circle cx="4.6" cy="4.3" r="1" fill="#ff8d7d"/><circle cx="4.6" cy="12.1" r="1" fill="#a4f09a"/></g>
<!-- options list -->
<g transform="translate(818.5,7)"><rect x=".6" y=".6" width="15" height="17" fill="#fff" stroke="#222" stroke-width="1.2"/><rect x="2.6" y="3" width="4" height="3" fill="#2f7fb5" stroke="#1d4c68" stroke-width=".6"/><rect x="2.6" y="7.8" width="4" height="3" fill="#2f7fb5" stroke="#1d4c68" stroke-width=".6"/><rect x="2.6" y="12.6" width="4" height="3" fill="#2f7fb5" stroke="#1d4c68" stroke-width=".6"/><path d="M8.4 4.5h5.4M8.4 9.3h5.4M8.4 14.1h5.4" stroke="#222" stroke-width="1.2"/></g>
<!-- gear -->
<g transform="translate(852,16)"><path d="M-1.5 -8 L1.5 -8 L2.1 -5.6 L3.7 -4.9 L5.9 -6.2 L7.9 -4 L6.5 -2 L7 -.4 L8.4 0 L8.4 2.6 L6.2 3.2 L5.5 4.7 L6.8 6.8 L4.7 8.8 L2.7 7.5 L1.2 8.1 L.7 8.4 L-1.9 8.4 L-2.5 6.2 L-4 5.5 L-6.2 6.8 L-8.1 4.7 L-6.8 2.7 L-7.4 1.2 L-8.2 .7 L-8.2 -1.9 L-6 -2.5 L-5.3 -4 L-6.6 -6.2 L-4.5 -8.1 L-2.5 -6.8 Z" fill="#fafafa" stroke="#333" stroke-width="1"/><circle cx="0" cy=".2" r="3" fill="#f6f6f6" stroke="#333" stroke-width="1"/></g>
<!-- search box icons -->
<rect x="1311.5" y="8" width="15" height="14" fill="#2a2a2a" stroke="#111" stroke-width="1"/><path d="M1314.5 11 L1319.5 14.8 L1314.5 18.5" fill="none" stroke="#fff" stroke-width="1.5"/><path d="M1320 19.5h4.5" stroke="#fff" stroke-width="1.2"/>
<circle cx="1486" cy="13" r="5" fill="#e8f2fa" stroke="#5b8fb5" stroke-width="1.4"/><path d="M1482.5 17 L1477.5 22.5" stroke="#5b8fb5" stroke-width="2.2" stroke-linecap="round"/>
<!-- user -->
<g transform="translate(1517,6)"><circle cx="7" cy="5" r="3.6" fill="#ddd" stroke="#888" stroke-width="1"/><path d="M1 18.5 C1 12 4 10 7 10 C10 10 13 12 13 18.5 Z" fill="#ddd" stroke="#888" stroke-width="1"/></g>
<text x="1545" y="22" font-family="Liberation Sans, sans-serif" font-size="17" font-weight="bold" fill="#222">?</text>
<!-- window controls -->
<rect x="1584.5" y="18.5" width="9.5" height="3" fill="#222"/>
<g transform="translate(1607.500,9.5)" fill="none" stroke="#222" stroke-width="1.2"><rect x="0" y="0" width="15" height="12"/><path d="M7.5 0v12M2.5 6h10M4.5 4l-2 2 2 2M10.500 4l2 2-2 2"/></g>
<g fill="none" stroke="#222" stroke-width="1.3"><rect x="1635.500" y="12.5" width="9" height="7" fill="#f6f6f6"/><path d="M1638.500 12.500 v-2.500 h9 v7 h-3"/></g>
<path d="M1662 10.500 L1672 21.500 M1672 10.500 L1662 21.500" stroke="#222" stroke-width="1.6"/>

<!-- ===== ribbon icons ===== -->
<!-- Sketch -->
<g fill="none"><path d="M26 43.500h7M26 47.500h10M26 51.500h10M26 55.500h10M24.500 45v13M28.500 45v13M32.500 45v13" stroke="#e4e4e4" stroke-width="1"/><path d="M33.500 43.300 L19.800 43.300 L19.800 55 Q19.800 59.800 24.600 59.800 L36.500 59.800" stroke="#2e6e8e" stroke-width="1.9"/></g>
<!-- Smart dimension -->
<g><path d="M75.500 51.500 L82.500 45" stroke="#222" stroke-width="1.6"/><path d="M74 53 L75 48.200 L78.600 52 Z M84.200 43.300 L83.300 48 L79.700 44.300 Z" fill="#222"/><path d="M83.500 44.300 L90.200 51 M73.500 53 L80 59.500" stroke="#2e6e8e" stroke-width="2" fill="none"/><path d="M73.800 53.300 L77.500 49.600" stroke="#2e6e8e" stroke-width="1.6"/></g>
<!-- small sketch tools -->
<g fill="#fff" stroke="#222" stroke-width="1">
 <path d="M123 57.500 L138.500 42.500" stroke="#2e6e8e" stroke-width="1.8"/><rect x="121.500" y="56" width="3" height="3"/><rect x="137" y="41" width="3" height="3"/>
 <circle cx="170.500" cy="49.700" r="7.800" fill="none" stroke="#2e6e8e" stroke-width="1.800"/><rect x="169" y="48.200" width="3" height="3"/><rect x="175.500" y="42.500" width="3" height="3"/>
 <path d="M204.500 57 C206.500 50 207 43.500 209.500 43.500 C212 43.500 212 56.500 214.500 56.500 C216.500 56.500 217.500 50 218 43.500" fill="none" stroke="#2e6e8e" stroke-width="1.800"/>
 <path d="M123.300 71.800 L138.800 71.800 L138.800 82 L123.300 82 Z" fill="none" stroke="#2e6e8e" stroke-width="1.800"/><rect x="121.500" y="80.500" width="3" height="3"/><rect x="137.300" y="70" width="3" height="3"/>
 <path d="M164 79 C164 69.500 177.600 69.500 177.600 79" fill="none" stroke="#2e6e8e" stroke-width="1.800"/><rect x="162.500" y="77.500" width="3" height="3"/><rect x="169.300" y="70" width="3" height="3"/><rect x="176.100" y="77.500" width="3" height="3"/><path d="M169.500 77.500l2.500 2.500M172 77.500l-2.500 2.500" stroke="#ccc" stroke-width=".8"/>
 <ellipse cx="211" cy="75.700" rx="9" ry="6.200" transform="rotate(-28 211 75.700)" fill="none" stroke="#2e6e8e" stroke-width="1.800"/><rect x="209.500" y="74.200" width="3" height="3"/>
 <rect x="123.500" y="96.800" width="15.500" height="10" rx="5" fill="none" stroke="#2e6e8e" stroke-width="1.900"/><rect x="126.200" y="100.300" width="3" height="3"/><rect x="133.300" y="100.300" width="3" height="3"/>
 <path d="M162.500 102 L166.500 94.800 L175 94.800 L179 102 L175 109.200 L166.500 109.200 Z" fill="none" stroke="#2e6e8e" stroke-width="1.900"/><rect x="169.300" y="100.500" width="3" height="3"/>
</g>
<path d="M202.500 94.500 L212 94.500 Q218.500 94.500 218.500 101 L218.500 110.500" fill="none" stroke="#c9c9c9" stroke-width="1.800"/>
<rect x="248.500" y="99" width="5.500" height="5.500" fill="#58a6d6" stroke="#1d5c82" stroke-width="1"/>
<!-- dashed plane -->
<path d="M245.500 44.500 L258 42 L258 56 L245.500 58.500 Z" fill="#e6e6e6" stroke="#555" stroke-width="1" stroke-dasharray="2 1.500"/><path d="M251.800 43v14M246 51.500h11.500" stroke="#bbb" stroke-width=".8"/>
<!-- text A -->
<path d="M243.500 83 L250.300 68.800 L252.300 68.800 L259.200 83 L255.300 83 L253.800 79.500 L248.800 79.500 L247.300 83 Z M249.800 77 L252.800 77 L251.300 73 Z" fill="#fff" stroke="#2e6e8e" stroke-width="1.100" stroke-linejoin="round"/>
<!-- Trim (disabled) -->
<g stroke="#c6c6c6" fill="none" stroke-width="1.500"><circle cx="285.500" cy="46.500" r="2.700"/><circle cx="285.500" cy="56" r="2.700"/><path d="M287.500 48.500 L298 57.500 M287.500 54 L297 45"/><path d="M293.500 43v5M298.500 47.500v3M290 59.500h10" /></g>
<!-- Convert entities cube -->
<g stroke="#2a2a2a" stroke-width="1.200" stroke-linejoin="round"><path d="M332.500 47.500 L340.500 43.500 L347.800 46.300 L347.800 56.800 L339.500 60.800 L332.500 57.500 Z" fill="#fbfbfb"/><path d="M332.500 47.500 L339.500 50.300 L347.800 46.300 M339.500 50.300 L339.500 60.800" fill="none"/><path d="M339.500 51 L339.500 60.300" stroke="#3a8cc0" stroke-width="2"/></g>
<!-- Offset entities (disabled) -->
<path d="M394.500 50.500 L381.500 50.500 L381.500 63 Q381.500 67.500 386 67.500 L397.500 67.500 M394.500 54.500 L385.500 54.500 L385.500 61.500 Q385.500 63.500 387.500 63.500 L394.500 63.500" fill="none" stroke="#c6c6c6" stroke-width="1.500"/>
<!-- Offset on surface -->
<g stroke-linejoin="round"><path d="M428.500 58.500 L436 50.500 L445.500 57.500 C441.500 59.500 438.500 62.500 436.500 67 Z" fill="#9fd0ea" stroke="#1f4f68" stroke-width="1.700"/><path d="M432 58.500 L436.500 54 L442 58 C439.500 59.500 438 61 436.500 63.500 Z" fill="#eaf5fb" stroke="#2e6e8e" stroke-width=".8"/></g>
<!-- mirror / pattern / move (disabled) -->
<g stroke="#c9c9c9" fill="none" stroke-width="1.300"><path d="M472.500 41v17"/><path d="M465.500 44.500 h3.500 v3.500 h-3.500 z M465.500 51.500 h3.500 v3.500 h-3.500z M467.300 48v3.500"/><path d="M476.500 44.500 h3.500 v3.500 h-3.500 z M476.500 51.500 h3.500 v3.500 h-3.500z M478.300 48v3.500"/>
<path d="M466 69.500 h4 v2.500 h2 v3 h-6 z M474.500 69.500 h4 v2.500 h2 v3 h-6 z M466 78 h4 v2.500 h2 v3 h-6 z M474.500 78 h4 v2.500 h2 v3 h-6 z"/>
<path d="M466 100.500 L471.500 95 M467.500 94.500 h4.500 v4.500"/><rect x="474.500" y="94.500" width="5.500" height="5.500"/><path d="M465.500 104.500h6M465.500 108.500h6" stroke-dasharray="1.500 1.500"/></g>
<!-- display/delete relations (disabled) -->
<g stroke="#c6c6c6" fill="none" stroke-width="1.400"><path d="M676.500 43v13M671 56.500h11"/><path d="M679.500 56.500 C682.500 52.500 686.500 52.500 689.500 56.500 C686.500 60 682.500 60 679.500 56.500 Z"/><circle cx="684.500" cy="56.300" r="1.300"/></g>
<!-- repair sketch (disabled) -->
<g stroke="#c6c6c6" fill="none" stroke-width="1.400"><path d="M748 50.500 L736 50.500 L736 61.500 Q736 66.500 741 66.500 L752.500 66.500"/><path d="M741.500 63.500 L747.500 57.500 M746.500 53.500 a3 3 0 1 0 4.500 4.500 l-2.500 -.5 l-1.500 -1.500 z" /><circle cx="741.500" cy="63" r="1.500"/></g>
<!-- quick snaps -->
<g fill="none"><path d="M797.500 43.800 L781 43.800 L781 61" stroke="#2e6e8e" stroke-width="1.900"/><circle cx="790.500" cy="53" r="6" stroke="#222" stroke-width="1.500"/><circle cx="790.500" cy="53" r="1.800" fill="#222"/></g>
<!-- rapid sketch -->
<g fill="none"><path d="M832 54.500h10M832 58.500h10M834.500 52v13M838.500 52v13" stroke="#e3c9c9" stroke-width=".8"/><path d="M840.500 51 L827.300 51 L827.300 61.500 Q827.300 66.300 832 66.300 L844 66.300" stroke="#2e6e8e" stroke-width="1.900"/><path d="M839.500 50.500 L844.500 50 L841.500 53.500 L844.500 53.500 L836 60.500 L838.500 55.800 L835.500 56 Z" fill="#f5a623" stroke="#a96a00" stroke-width=".7" stroke-linejoin="round"/></g>
<!-- instant2d -->
<g fill="none"><path d="M892 51 L878.800 51 L878.800 61.500 Q878.800 66.300 883.500 66.300 L895.500 66.300" stroke="#2e6e8e" stroke-width="1.900"/><path d="M882.500 55.500 L885.500 52.500 L896 60.500 L893.500 63.500 Z" fill="#f2d14b" stroke="#444" stroke-width=".9" stroke-linejoin="round"/><path d="M886.500 56.500l1.500-1.500M889 58.500l1.500-1.500M891.500 60.500l1.500-1.500" stroke="#444" stroke-width=".8"/><path d="M885 61 L891.500 65.500 M891.500 65.500 l-3.500-.5 M891.500 65.500 l-.5-3.500" stroke="#1d6ea0" stroke-width="1.800"/></g>
<!-- shaded sketch contours (disabled) -->
<g><path d="M946 51.500 L953.500 63.500 L940.500 63.500 Z" fill="#d6d6d6"/><circle cx="942.500" cy="62" r="4.500" fill="#cbcbcb"/></g>

<!-- ===== panel tab icons ===== -->
<g transform="translate(53,168)"><rect x=".6" y=".6" width="16.500" height="16.500" rx="1" fill="#fff" stroke="#222" stroke-width="1.100"/><rect x="1.200" y="1.200" width="15.300" height="2.600" fill="#2f7fb5"/><rect x="2.800" y="5.800" width="4" height="2.300" fill="#2f7fb5" stroke="#174c6c" stroke-width=".5"/><rect x="2.800" y="9.600" width="4" height="2.300" fill="#2f7fb5" stroke="#174c6c" stroke-width=".5"/><rect x="2.800" y="13.400" width="4" height="2.300" fill="#2f7fb5" stroke="#174c6c" stroke-width=".5"/><path d="M8.500 7h6.500M8.500 10.800h6.500M8.500 14.600h6.500" stroke="#222" stroke-width="1.100"/></g>
<g transform="translate(94,168)" fill="#f4f4f4" stroke="#333" stroke-width="1.100"><path d="M3 1v15.500 M3 4.500h4 M3 13.500h7" fill="none"/><rect x="1" y=".6" width="5" height="4"/><rect x="7" y="2.500" width="5" height="4.500"/><path d="M3 9.500h4" fill="none"/><rect x="10" y="11" width="5.500" height="5.500"/><rect x="7" y="7.500" width="4" height="3.500" stroke-width=".9"/></g>
<g transform="translate(141.500,176.500)" fill="none" stroke="#111"><circle r="6" stroke-width="1.700"/><path d="M-9.500 0h19M0 -9.500v19" stroke-width="1.700"/><circle r="1.800" fill="#111"/></g>
<g transform="translate(181.500,176.500)"><circle r="8.300" fill="#fff" stroke="#777" stroke-width=".6"/><path d="M0 0 L-8.300 0 A8.300 8.300 0 0 1 2 -8.050 Z" fill="#e0362a"/><path d="M0 0 L2 -8.050 A8.300 8.300 0 0 1 7 4.500 Z" fill="#2a2a2a"/><path d="M0 0 L7 4.500 A8.300 8.300 0 0 1 -4.500 7 Z" fill="#f2c51d"/><path d="M0 0 L-4.500 7 A8.300 8.300 0 0 1 -8.300 0 Z" fill="#3aa845"/><path d="M0 0 L-8.300 0 A8.300 8.300 0 0 1 -5 -6.600 Z" fill="#2f7fd0"/><ellipse cx="3.500" cy="-2.500" rx="2" ry="5" transform="rotate(-25 3.500 -2.500)" fill="#e0362a" stroke="#5a1008" stroke-width=".5"/><ellipse cx="-2" cy="-3.500" rx="3.500" ry="2" fill="#fff" opacity=".45"/></g>
<path d="M213.500 171 L219 176.500 L213.500 182" fill="none" stroke="#666" stroke-width="1.800"/>
<!-- funnel -->
<g transform="translate(8,195)"><path d="M1 4 L7 11 L7 16.500 L10 18 L10 11 L16 4 Z" fill="#fbfbfb" stroke="#2a2a2a" stroke-width="1" stroke-linejoin="round"/><ellipse cx="8.500" cy="3.500" rx="7.800" ry="2.800" fill="#3a8cc0" stroke="#174c6c" stroke-width="1"/><ellipse cx="8.500" cy="3" rx="5.500" ry="1.200" fill="#9fd0ea"/></g>
<!-- ===== heads-up toolbar ===== -->
<rect x="761.500" y="120.500" width="25.500" height="25" fill="#a9a9a9" stroke="#7d7d7d" stroke-width="1"/>
<g transform="translate(766,124)" stroke="#174c6c" stroke-width="1" stroke-linejoin="round"><path d="M0.500 4.500 L8.500 0.500 L15.500 4 L15.500 12.500 L7.500 16.500 L0.500 13 Z" fill="#5bb4e6"/><path d="M0.500 4.500 L7.500 8 L15.500 4 M7.500 8 L7.500 16.500" fill="none"/><path d="M0.500 4.500 L8.500 0.500 L15.500 4 L7.500 8 Z" fill="#8fd0f4"/></g>
<g transform="translate(791.500,124)"><path d="M0.500 12.500 L10 9.500 L17.500 13 L7.500 16.500 Z" fill="#7fc1e6" stroke="#2e6e8e" stroke-width=".9" stroke-linejoin="round"/><path d="M8.500 13 L8.500 2" stroke="#222" stroke-width="1.600"/><path d="M5.500 4.500 L8.500 0.500 L11.500 4.500" fill="none" stroke="#222" stroke-width="1.500"/></g>
<g transform="translate(817,124)"><path d="M6 11.500 L1.500 16" stroke="#6b9fc3" stroke-width="2.600" stroke-linecap="round"/><circle cx="11" cy="6.500" r="5.800" fill="#f2f7fb" stroke="#555" stroke-width="1.200"/><path d="M11 2.800v7.400M7.300 6.500h7.400" stroke="#888" stroke-width=".8"/><path d="M11 2.300l-1.300 1.500h2.600zM11 10.700l-1.300-1.500h2.600zM6.800 6.500l1.500-1.300v2.600zM15.200 6.500l-1.500-1.300v2.600z" fill="#555"/></g>
<g transform="translate(842.500,124)"><path d="M6 12 L1.500 16.500" stroke="#6b9fc3" stroke-width="2.600" stroke-linecap="round"/><rect x="6.500" y=".8" width="11.500" height="10" fill="none" stroke="#444" stroke-width="1" stroke-dasharray="2 1.300"/><circle cx="10.500" cy="7.500" r="5.500" fill="#eef5fa" stroke="#777" stroke-width="1.200"/></g>
<g transform="translate(869,124)"><path d="M1 12 L12.500 2.500 L16.500 6 L6 15.500 C4 16.500 1 15 1 12 Z" fill="#ececec" stroke="#777" stroke-width="1"/><path d="M11 4 L15 7.500" stroke="#999" stroke-width="1"/><path d="M18 12.500 L10.500 12.500 M13.500 9.500 L10.500 12.500 L13.500 15.500" fill="none" stroke="#3a8cc0" stroke-width="1.800"/></g>
<g transform="translate(895,124)" stroke-linejoin="round"><path d="M0.500 7 C0.500 3.500 4 1.500 9 1.500 C14 1.500 17.500 3.500 17.500 7 L17.500 13.500 L13 15 L13 8.500 C13 7 11 6 9 6 C7 6 5 7 5 8.500 L5 16 L0.500 14 Z" fill="#e6e6e6" stroke="#555" stroke-width="1"/><path d="M0.500 7.500 L5 9 L5 16 L0.500 14 Z M13 8.500 L17.500 7.500 L17.500 13.500 L13 15 Z" fill="#7fc1e6" stroke="#2e6e8e" stroke-width=".8"/><path d="M1 9.500l3.500 3M1 12l3.500 3M13.500 10l3.500 -2.500M13.500 13l3.500 -2.500" stroke="#2e6e8e" stroke-width=".7"/></g>
<g transform="translate(921,124)" stroke-linejoin="round"><path d="M5.500 0.800 L17.500 0.800 L17.500 12.500 L12.500 16.800 L0.800 16.800 L0.800 5.500 Z" fill="#f8f8f8" stroke="#444" stroke-width="1"/><path d="M0.800 5.500 L12.500 5.500 L17.500 0.800 M12.500 5.500 L12.500 16.800" fill="none" stroke="#444" stroke-width=".9"/><rect x="0.800" y="5.500" width="11.700" height="11.300" fill="#7fc1e6" stroke="#2e6e8e" stroke-width=".9"/><path d="M9.500 3.200h3M14.500 7v4" stroke="#444" stroke-width=".9"/></g>
<g transform="translate(961.500,124)" stroke-linejoin="round"><path d="M0.800 4 L7 0.800 L17 2.500 L17 13.500 L7.500 16.800 L0.800 14 Z" fill="#fafafa" stroke="#444" stroke-width="1"/><path d="M0.800 4 L7.500 6 L7.500 16.800 L0.800 14 Z" fill="#7fc1e6" stroke="#2e6e8e" stroke-width=".9"/><path d="M7.500 6 L17 2.500" stroke="#444" stroke-width=".9"/><path d="M7.500 6 L12 4.500 L12 15.200 L7.500 16.800 Z" fill="#b5dcf2" stroke="none"/></g>
<g transform="translate(1001,125)"><path d="M0.500 8 C4 2.500 14 2.500 17.500 8 C14 13.500 4 13.500 0.500 8 Z" fill="#efefef" stroke="#888" stroke-width="1.100"/><circle cx="9" cy="8" r="3.600" fill="#9a9a9a"/><circle cx="9" cy="8" r="1.600" fill="#444"/><path d="M9.500 0v16" stroke="#777" stroke-width="1.300"/></g>
<g transform="translate(1050,132)"><circle r="8.300" fill="#fff" stroke="#777" stroke-width=".5"/><path d="M0 0 L-8.300 0 A8.300 8.300 0 0 1 3 -7.700 Z" fill="#e0362a"/><path d="M0 0 L3 -7.700 A8.300 8.300 0 0 1 6.500 5.200 Z" fill="#3aa845"/><path d="M0 0 L6.500 5.200 A8.300 8.300 0 0 1 -8.300 0 Z" fill="#2f7fd0"/><ellipse cx="-2" cy="-3.500" rx="4" ry="2.200" fill="#fff" opacity=".45"/><path d="M1 9.500 L2 5.500 L8.500 -1 L11 1.500 L4.500 8 Z" fill="#f2c51d" stroke="#7a5a00" stroke-width=".8"/><path d="M1 9.500 L2 5.500 L4.500 8 Z" fill="#333"/></g>
<g transform="translate(1076,131)"><path d="M-9.500 6 L-7 2 L8 2 L10 6 L10 11.500 L-9.500 11.500 Z" fill="#222"/><path d="M-7 6.500h3v2.500h-3zM-1 6.500h3v2.500h-3zM5 6.500h3v2.500h-3zM-4 9h3v2.500h-3zM2 9h3v2.500h-3z" fill="#fff"/><circle r="7.800" cy="-1.500" fill="#fff" stroke="#777" stroke-width=".5"/><path d="M0 -1.500 L-7.800 -1.500 A7.800 7.800 0 0 1 3 -8.700 Z" fill="#e0362a"/><path d="M0 -1.500 L3 -8.700 A7.800 7.800 0 0 1 6 3.500 Z" fill="#3aa845"/><path d="M0 -1.500 L6 3.500 A7.800 7.800 0 0 1 -7.800 -1.500 Z" fill="#2f7fd0"/><ellipse cx="-2" cy="-5" rx="3.800" ry="2" fill="#fff" opacity=".45"/></g>
<g transform="translate(1107,124.500)"><rect x=".6" y=".6" width="17" height="11.500" fill="#dcdcdc" stroke="#555" stroke-width="1.200"/><rect x="2" y="2" width="14.200" height="8.700" fill="#f2f2f2"/><path d="M9 12.500v3M5 16h8.500" stroke="#444" stroke-width="1.500"/></g>
<!-- inner window controls -->
<g fill="none" stroke="#8a8a8a" stroke-width="1.100"><rect x="1551.500" y="127.500" width="10" height="11"/><path d="M1558 130.500l-3 2.500 3 2.500z" fill="#8a8a8a"/><rect x="1577.500" y="127.500" width="10" height="11"/><path d="M1581 130.500l3 2.500-3 2.500z" fill="#8a8a8a"/><rect x="1603.500" y="136" width="8.500" height="2" fill="#8a8a8a"/><rect x="1628.500" y="130.500" width="8" height="6.500" fill="#f2f3f7"/><path d="M1631.500 130.500v-2.500h8v6.500h-3"/><path d="M1655 127.500 L1665 138.500 M1665 127.500 L1655 138.500" stroke-width="1.400"/></g>
<!-- ===== right task pane ===== -->
<rect x="1654.500" y="194.500" width="25" height="215" fill="#d6d6d6" stroke="#8f8f8f" stroke-width="1"/>
<rect x="1655" y="219" width="24" height="23" fill="#fbfbfb"/>
<path d="M1654.500 218.500h25M1654.500 242.500h25M1654.500 266.500h25M1654.500 290.500h25M1654.500 314.500h25M1654.500 338.500h25M1654.500 362.500h25M1654.500 386.500h25" stroke="#9f9f9f" stroke-width="1"/>
<g transform="translate(1658,197)"><path d="M3 9.500 L3 18 L15 18 L15 9.500 L9 4 Z" fill="#fff" stroke="#333" stroke-width="1.100"/><rect x="7.300" y="12" width="3.600" height="6" fill="#fff" stroke="#333" stroke-width=".9"/><path d="M0.500 10.500 L9 2 L17.500 10.500" fill="none" stroke="#2a6f97" stroke-width="2.300"/></g>
<g transform="translate(1658.500,221.500)" stroke="#333" stroke-width="1" stroke-linejoin="round" fill="#f2f2f2"><path d="M1 4 L5.500 2 L5.500 15 L1 17.500 Z M5.500 2 L9 4 L9 17 L5.500 15"/><path d="M6 4.500 L10.500 2.500 L10.500 15.500 L6 18 Z M10.500 2.500 L14 4.500 L14 17.500 L10.500 15.500"/><path d="M11 5 L15.500 3 L15.500 16 L11 18.500 Z M15.500 3 L18 4.500 L18 17 L15.500 16" /></g>
<g transform="translate(1657.500,246)" stroke-linejoin="round"><path d="M1 2.500 L6 2.500 L7.500 4.500 L15 4.500 L15 16 L1 16 Z" fill="#e6e6e6" stroke="#444" stroke-width="1"/><path d="M1 16 L5 7.500 L20 7.500 L15.500 16 Z" fill="#fafafa" stroke="#444" stroke-width="1"/></g>
<g transform="translate(1658,270)"><rect x=".6" y=".6" width="17" height="16.500" fill="#fafafa" stroke="#333" stroke-width="1.100"/><path d="M3 3.500h6v3h-6zM11 3.500h4.500v3h-4.500zM5 6.500h2v4h4v4h-8v-4h2z" fill="#f2c51d" stroke="#7a5a00" stroke-width=".7"/><rect x="12.500" y="8.500" width="3" height="6.500" fill="#bbb" stroke="#555" stroke-width=".7"/></g>
<g transform="translate(1667,302.500)"><circle r="8.300" fill="#fff" stroke="#777" stroke-width=".5"/><path d="M0 0 L-8.300 0 A8.300 8.300 0 0 1 3 -7.700 Z" fill="#e0362a"/><path d="M0 0 L3 -7.700 A8.300 8.300 0 0 1 6.500 5.200 Z" fill="#f2c51d"/><path d="M0 0 L6.500 5.200 A8.300 8.300 0 0 1 -4 7.300 Z" fill="#3aa845"/><path d="M0 0 L-4 7.300 A8.300 8.300 0 0 1 -8.300 0 Z" fill="#2f7fd0"/><ellipse cx="-2" cy="-3.500" rx="4" ry="2.200" fill="#fff" opacity=".45"/></g>
<g transform="translate(1658.500,318)"><rect x=".6" y=".6" width="16.500" height="16.500" fill="#fff" stroke="#222" stroke-width="1.100"/><rect x="1.200" y="1.200" width="15.300" height="2.600" fill="#2f7fb5"/><rect x="2.800" y="5.800" width="4" height="2.300" fill="#2f7fb5"/><rect x="2.800" y="9.600" width="4" height="2.300" fill="#2f7fb5"/><rect x="2.800" y="13.400" width="4" height="2.300" fill="#2f7fb5"/><path d="M8.500 7h6.500M8.500 10.800h6.500M8.500 14.600h6.500" stroke="#222" stroke-width="1.100"/></g>
<g transform="translate(1667,350.500)"><circle r="8.500" fill="#3a8cd0" stroke="#174c6c" stroke-width=".8"/><path d="M-5.500 -1 C-4 -5.500 3 -6 5 -2 L7 -3.500 L6.500 2 L1.500 0.500 L3.500 -.8 C2 -3 -2 -3 -3.500 0 Z M5.500 1.500 C4 6 -3 6.500 -5 2.500 L-7 4 L-6.500 -1.500 L-1.500 0 L-3.500 1.300 C-2 3.500 2 3.500 3.500 .5 Z" fill="#fff" stroke="#174c6c" stroke-width=".5"/></g>
<g transform="translate(1658,366)"><path d="M3 6.500 L3 13.500 L10 13.500" fill="none" stroke="#e8a06a" stroke-width="3"/><path d="M3 6.500 L3 13.500 L10 13.500" fill="none" stroke="#a05a20" stroke-width=".8" transform="translate(-1.800,0)"/><circle cx="13.500" cy="13.500" r="3.300" fill="#f4c08a" stroke="#8a4a10" stroke-width=".9"/><circle cx="13.500" cy="13.500" r="1.200" fill="#fff" stroke="#8a4a10" stroke-width=".6"/><path d="M6.500 2 L6.500 8 L12.500 2 L12.500 8 Z M9.500 5V1.500M8 1.500h3" fill="#fafafa" stroke="#222" stroke-width=".9" stroke-linejoin="round"/></g>
<g transform="translate(1658,389.500)"><path d="M2 1 L2 7 Q2 10 5 10 L8 10" fill="none" stroke="#e8a06a" stroke-width="3.200"/><rect x="12" y="2.500" width="6" height="5" fill="#3aa845" stroke="#1b5e20" stroke-width=".7"/><rect x="12" y="10" width="6" height="5" fill="#e8a06a" stroke="#8a4a10" stroke-width=".7"/><circle cx="10" cy="9.500" r="4.800" fill="#cfe6f5" stroke="#2e6e8e" stroke-width="1.200" opacity=".95"/><path d="M6.500 13 L1.500 18.500" stroke="#2a78b0" stroke-width="2.400" stroke-linecap="round"/></g>
<!-- ===== triad ===== -->
<g>
<path d="M270 918 L253 929.500" stroke="#2626c4" stroke-width="4"/><path d="M255.500 924.500 L249.300 932 L259 930.800 Z" fill="#5a5af0"/>
<path d="M270 918 L287 929.300" stroke="#b02626" stroke-width="4"/><path d="M284.500 924.300 L290.500 931.800 L281 930.600 Z" fill="#e45a5a"/>
<path d="M270 918 L270 903" stroke="#1f6b2a" stroke-width="3.600"/><path d="M265.800 903.500 L270 896 L274.200 903.500 L272 905.500 L268 905.500 Z" fill="#237a30"/>
<text x="266.600" y="893.600" font-family="Liberation Sans, sans-serif" font-size="9" fill="#1f6b2a">Y</text>
<text x="290.600" y="938.200" font-family="Liberation Sans, sans-serif" font-size="9.500" font-weight="bold" fill="#c43030">X</text>
<text x="242.600" y="939" font-family="Liberation Sans, sans-serif" font-size="9.500" font-weight="bold" fill="#2626c4">Z</text>
</g>
<!-- status icon -->
<g transform="translate(1661.500,995)" stroke="#333" stroke-width="1" stroke-linejoin="round" fill="#f4f4f4"><path d="M0.500 5 L9.500 0.500 L15.500 5.500 L15.500 9 L6.500 13.500 L0.500 8.500 Z"/><path d="M0.500 5 L6.500 10 L15.500 5.500 M6.500 10 L6.500 13.500" fill="none"/><ellipse cx="8" cy="5" rx="2.500" ry="1.500" fill="#fff"/></g>

<g transform="translate(13.5,168) scale(1.05)" stroke-linejoin="round">
<path d="M0.500 6.900 L5.900 3 L6.400 1 L10.900 0.300 L13.400 1.500 L13.400 5.900 L17 7.900 L16.800 13.400 L11.400 17.800 L1 11.400 Z" fill="#f4c81f" stroke="#4f4100" stroke-width="1.100"/>
<path d="M6.400 1 L8.900 3 L13.400 1.500 L10.900 0.300 Z M8.900 8.400 L13.400 5.900 L17 7.900 L11.900 10.900 Z" fill="#fbe68d" stroke="none"/>
<path d="M6.400 1 L8.900 3 L13.400 1.500 M8.900 3 L8.900 8.400 L11.900 10.900 L17 7.900 M8.900 8.400 L13.400 5.900 M11.900 10.900 L11.400 17.800 M0.500 6.900 L5.900 3" fill="none" stroke="#6b5800" stroke-width=".9"/>
<path d="M11.900 10.900 L17 7.900 L16.800 13.400 L11.400 17.800 Z" fill="#d9a90c" stroke="none" opacity=".6"/>
</g>
<g transform="translate(5,218) scale(1.0)" stroke-linejoin="round">
<path d="M0.500 6.900 L5.900 3 L6.400 1 L10.900 0.300 L13.400 1.500 L13.400 5.900 L17 7.900 L16.800 13.400 L11.400 17.800 L1 11.400 Z" fill="#f4c81f" stroke="#4f4100" stroke-width="1.100"/>
<path d="M6.400 1 L8.900 3 L13.400 1.500 L10.900 0.300 Z M8.900 8.400 L13.400 5.900 L17 7.900 L11.900 10.900 Z" fill="#fbe68d" stroke="none"/>
<path d="M6.400 1 L8.900 3 L13.400 1.500 M8.900 3 L8.900 8.400 L11.900 10.900 L17 7.900 M8.900 8.400 L13.400 5.900 M11.900 10.900 L11.400 17.800 M0.500 6.900 L5.900 3" fill="none" stroke="#6b5800" stroke-width=".9"/>
<path d="M11.900 10.900 L17 7.900 L16.800 13.400 L11.400 17.800 Z" fill="#d9a90c" stroke="none" opacity=".6"/>
</g>
<g transform="translate(27,241.5)"><path d="M0.500 1 L6 1 L7.500 3 L17.500 3 L17.500 15.500 L0.500 15.500 Z" fill="#f4f4f4" stroke="#4a4a4a" stroke-width="1" stroke-linejoin="round"/><path d="M2.500 5.500 L15.500 5.500 L15.500 15 L2.500 15 Z" fill="#fff" stroke="#555" stroke-width=".9"/><circle cx="10" cy="10.500" r="3.600" fill="#fff" stroke="#333" stroke-width="1"/><path d="M10 8.500v2.200h2" stroke="#333" stroke-width=".8" fill="none"/><path d="M3.500 10.500 C4 7.500 6 6.500 8 7 M3 8.500 L3.700 11 L6 10" fill="none" stroke="#2f7fb5" stroke-width="1.300"/></g>
<g transform="translate(27,263.5)"><path d="M0.500 1 L6 1 L7.500 3 L17.500 3 L17.500 15.500 L0.500 15.500 Z" fill="#f4f4f4" stroke="#4a4a4a" stroke-width="1" stroke-linejoin="round"/><path d="M2.500 5.500 L15.500 5.500 L15.500 15 L2.500 15 Z" fill="#fff" stroke="#555" stroke-width=".9"/><circle cx="9.500" cy="10.500" r="3.800" fill="#fff" stroke="#333" stroke-width="1"/><path d="M9.500 10.500 L12 8" stroke="#333" stroke-width=".9"/><path d="M9.500 14.300 A3.800 3.800 0 0 0 13.300 10.500 L9.500 10.500 Z" fill="#d9432b"/><path d="M5.700 10.500 A3.800 3.800 0 0 1 7 7.700" stroke="#2f7fb5" stroke-width="1.500" fill="none"/></g>
<g transform="translate(27,285.5)"><path d="M0.500 1 L6 1 L7.500 3 L17.500 3 L17.500 15.500 L0.500 15.500 Z" fill="#f4f4f4" stroke="#4a4a4a" stroke-width="1" stroke-linejoin="round"/><path d="M2.500 5.500 L15.500 5.500 L15.500 15 L2.500 15 Z" fill="#fff" stroke="#555" stroke-width=".9"/><text x="4.500" y="14.300" font-family="Liberation Serif, serif" font-weight="bold" font-size="11" fill="#2f7fb5">A</text></g>
<g transform="translate(26.5,306)"><path d="M5.500 2.500h12M5.500 8.500h12M5.500 14.500h6" stroke="#222" stroke-width="1.600"/><circle cx="2.200" cy="2.500" r="1.700" fill="#fff" stroke="#666" stroke-width=".8"/><circle cx="2.200" cy="8.500" r="1.700" fill="#4aa3df" stroke="#1d5c82" stroke-width=".8"/><circle cx="2.200" cy="14.500" r="1.700" fill="#f2c51d" stroke="#8a6a00" stroke-width=".8"/><circle cx="14.500" cy="14.500" r="3" fill="#222"/><circle cx="14.500" cy="14.500" r="1" fill="#f7f7f7"/><path d="M14.500 10.500v8M10.500 14.500h8M11.700 11.700l5.600 5.600M17.300 11.700l-5.600 5.600" stroke="#222" stroke-width="1.100"/></g>
<g transform="translate(27.5,329)" fill="none"><path d="M3.500 3.500 L13.500 1 L13.500 14 L3.500 16.500 Z" stroke="#444" stroke-width="1"/><path d="M8.500 0v18" stroke="#444" stroke-width="1" stroke-dasharray="3 1.500"/></g>
<g transform="translate(27.5,351)" fill="none"><path d="M3.500 3.500 L13.500 1 L13.500 14 L3.500 16.500 Z" stroke="#444" stroke-width="1"/><path d="M8.500 0v18" stroke="#444" stroke-width="1" stroke-dasharray="3 1.500"/></g>
<g transform="translate(27.5,373)" fill="none"><path d="M3.500 3.500 L13.500 1 L13.500 14 L3.500 16.500 Z" stroke="#444" stroke-width="1"/><path d="M8.500 0v18" stroke="#444" stroke-width="1" stroke-dasharray="3 1.500"/></g>
<g transform="translate(27.5,482.4)" fill="none"><path d="M3.500 3.500 L13.500 1 L13.500 14 L3.500 16.500 Z" stroke="#444" stroke-width="1"/><path d="M8.500 0v18" stroke="#444" stroke-width="1" stroke-dasharray="3 1.500"/></g>
<g transform="translate(27,394)" fill="none" stroke="#111" stroke-width="1.500"><path d="M3 1.500 L3 14.500 L16 14.500"/><path d="M0.500 4 L3 0.500 L5.500 4 M13.500 12 L17 14.500 L13.500 17" stroke-width="1.200"/></g>
<g transform="translate(27,416.5)" stroke-linejoin="round"><path d="M6.500 3.500 L13 0.800 L17 2.800 L17 13.500 L11 16.500 L6.500 14 Z" fill="#f6f6f6" stroke="#444" stroke-width="1"/><path d="M11 5.500 L17 2.800 M11 5.500 L11 16.500 M6.500 3.500 L11 5.500" fill="none" stroke="#444" stroke-width=".9"/><path d="M0.800 5.500 L6 3.500 L10.500 5.500 L10.500 13.500 L5 15.800 L0.800 13.500 Z" fill="#4aa3df" stroke="#174c6c" stroke-width="1"/><path d="M0.800 5.500 L5 7.500 L10.500 5.500 M5 7.500 L5 15.800" fill="none" stroke="#174c6c" stroke-width=".9"/><path d="M5.600 8 L10 6.300 L10 13.200 L5.600 15 Z" fill="#cfe8f7" stroke="none"/></g>
<g transform="translate(27,438.5)" stroke-linejoin="round"><path d="M1 6.500 C1 3.500 3 2 6 1.500 L12.500 0.800 L17.200 3.500 L17.200 12.500 L9 16.800 L1 13 Z" fill="#fbfbfb" stroke="#3a3a3a" stroke-width="1.100"/><path d="M1.300 6.500 C1.500 4 3.500 2.300 6 1.800 L12.500 1 L17 3.600 C13 4 10 6 9.200 9.800 Z" fill="#4aa3df" stroke="#174c6c" stroke-width=".8"/><path d="M9 9.800 L9 16.800 M9.200 9.800 C10 6 13 4 17.200 3.600" fill="none" stroke="#3a3a3a" stroke-width=".9"/></g>
<g transform="translate(27,460.5)" stroke-linejoin="round"><path d="M6.500 3.500 L13 0.800 L17 2.800 L17 13.500 L11 16.500 L6.500 14 Z" fill="#f6f6f6" stroke="#444" stroke-width="1"/><path d="M11 5.500 L17 2.800 M11 5.500 L11 16.500 M6.500 3.500 L11 5.500" fill="none" stroke="#444" stroke-width=".9"/><path d="M0.800 5.500 L6 3.500 L10.500 5.500 L10.500 13.500 L5 15.800 L0.800 13.500 Z" fill="#4aa3df" stroke="#174c6c" stroke-width="1"/><path d="M0.800 5.500 L5 7.500 L10.500 5.500 M5 7.500 L5 15.800" fill="none" stroke="#174c6c" stroke-width=".9"/><path d="M5.600 8 L10 6.300 L10 13.200 L5.600 15 Z" fill="#cfe8f7" stroke="none"/></g>
<g transform="translate(27,504.5)" stroke-linejoin="round"><path d="M6.500 3.500 L13 0.800 L17 2.800 L17 13.500 L11 16.500 L6.500 14 Z" fill="#f6f6f6" stroke="#444" stroke-width="1"/><path d="M11 5.500 L17 2.800 M11 5.500 L11 16.500 M6.500 3.500 L11 5.500" fill="none" stroke="#444" stroke-width=".9"/><path d="M0.800 5.500 L6 3.500 L10.500 5.500 L10.500 13.500 L5 15.800 L0.800 13.500 Z" fill="#4aa3df" stroke="#174c6c" stroke-width="1"/><path d="M0.800 5.500 L5 7.500 L10.500 5.500 M5 7.500 L5 15.800" fill="none" stroke="#174c6c" stroke-width=".9"/><path d="M5.600 8 L10 6.300 L10 13.200 L5.600 15 Z" fill="#cfe8f7" stroke="none"/></g>
<g transform="translate(27,526.5)" stroke-linejoin="round"><path d="M6.500 3.500 L13 0.800 L17 2.800 L17 13.500 L11 16.500 L6.500 14 Z" fill="#f6f6f6" stroke="#444" stroke-width="1"/><path d="M11 5.500 L17 2.800 M11 5.500 L11 16.500 M6.500 3.500 L11 5.500" fill="none" stroke="#444" stroke-width=".9"/><path d="M0.800 5.500 L6 3.500 L10.500 5.500 L10.500 13.500 L5 15.800 L0.800 13.500 Z" fill="#4aa3df" stroke="#174c6c" stroke-width="1"/><path d="M0.800 5.500 L5 7.500 L10.500 5.500 M5 7.500 L5 15.800" fill="none" stroke="#174c6c" stroke-width=".9"/><path d="M5.600 8 L10 6.300 L10 13.200 L5.600 15 Z" fill="#cfe8f7" stroke="none"/></g>
<g transform="translate(27,548.5)" stroke-linejoin="round"><path d="M2 3 L13.500 0.800 L17 2.500 L17 14 L5.500 16.800 L2 15 Z" fill="#fbfbfb" stroke="#3a3a3a" stroke-width="1.100"/><path d="M5.500 5 L17 2.500 M5.500 5 L5.500 16.800 M2 3 L5.500 5" fill="none" stroke="#3a3a3a" stroke-width=".9"/><path d="M8 7 L14.500 5.500 L14.500 12 L8 13.500 Z" fill="#4aa3df" stroke="#174c6c" stroke-width="1"/><path d="M9.800 8.300 L14.500 7.300 L14.500 12 L9.800 13.100 Z" fill="#e8f3fa" stroke="#174c6c" stroke-width=".6"/></g>
<g transform="translate(27,570.5)" stroke-linejoin="round"><path d="M2 3 L13.500 0.800 L17 2.500 L17 14 L5.500 16.800 L2 15 Z" fill="#fbfbfb" stroke="#3a3a3a" stroke-width="1.100"/><path d="M5.500 5 L17 2.500 M5.500 5 L5.500 16.800 M2 3 L5.500 5" fill="none" stroke="#3a3a3a" stroke-width=".9"/><path d="M8 7 L14.500 5.500 L14.500 12 L8 13.500 Z" fill="#4aa3df" stroke="#174c6c" stroke-width="1"/><path d="M9.800 8.300 L14.500 7.300 L14.500 12 L9.800 13.100 Z" fill="#e8f3fa" stroke="#174c6c" stroke-width=".6"/></g>
<g transform="translate(27,592.5)" stroke-linejoin="round"><path d="M1 5.500 L10 2.500 L16.500 5 L16.500 13.500 L8 17 L1 14 Z" fill="#fbfbfb" stroke="#3a3a3a" stroke-width="1.100"/><path d="M1 5.500 L8 8.500 L16.500 5 M8 8.500 L8 17" fill="none" stroke="#3a3a3a" stroke-width=".9"/><ellipse cx="11.500" cy="11" rx="2.800" ry="3.400" fill="#4aa3df" stroke="#174c6c" stroke-width=".9"/><ellipse cx="11.800" cy="11.200" rx="1.200" ry="1.600" fill="#e8f3fa"/><path d="M9 6.500 L17 1" stroke="#222" stroke-width="2"/><path d="M6 2 L8.500 3.500 L10.500 0.500 L10.300 3.800 L13 5 L9.800 5.300 L9 8 L8 5.300 L5 5.500 L7.500 4 Z" fill="#f5a623" stroke="#a96a00" stroke-width=".4"/></g>
<g transform="translate(27,614.5)" stroke-linejoin="round"><path d="M1 6.500 C1 3.500 3 2 6 1.500 L12.500 0.800 L17.200 3.500 L17.200 12.500 L9 16.800 L1 13 Z" fill="#fbfbfb" stroke="#3a3a3a" stroke-width="1.100"/><path d="M1.300 6.500 C1.500 4 3.500 2.300 6 1.800 L12.500 1 L17 3.600 C13 4 10 6 9.200 9.800 Z" fill="#4aa3df" stroke="#174c6c" stroke-width=".8"/><path d="M9 9.800 L9 16.800 M9.200 9.800 C10 6 13 4 17.200 3.600" fill="none" stroke="#3a3a3a" stroke-width=".9"/></g>
<g transform="translate(27,636.5)" stroke-linejoin="round"><path d="M1 6.500 C1 3.500 3 2 6 1.500 L12.500 0.800 L17.200 3.500 L17.200 12.500 L9 16.800 L1 13 Z" fill="#fbfbfb" stroke="#3a3a3a" stroke-width="1.100"/><path d="M1.300 6.500 C1.500 4 3.500 2.300 6 1.800 L12.500 1 L17 3.600 C13 4 10 6 9.200 9.800 Z" fill="#4aa3df" stroke="#174c6c" stroke-width=".8"/><path d="M9 9.800 L9 16.800 M9.200 9.800 C10 6 13 4 17.200 3.600" fill="none" stroke="#3a3a3a" stroke-width=".9"/></g>
<g transform="translate(27,658.5)" stroke-linejoin="round"><path d="M1 6.500 C1 3.500 3 2 6 1.500 L12.500 0.800 L17.200 3.500 L17.200 12.500 L9 16.800 L1 13 Z" fill="#fbfbfb" stroke="#3a3a3a" stroke-width="1.100"/><path d="M1.300 6.500 C1.500 4 3.500 2.300 6 1.800 L12.500 1 L17 3.600 C13 4 10 6 9.200 9.800 Z" fill="#4aa3df" stroke="#174c6c" stroke-width=".8"/><path d="M9 9.800 L9 16.800 M9.200 9.800 C10 6 13 4 17.200 3.600" fill="none" stroke="#3a3a3a" stroke-width=".9"/></g>
<g transform="translate(27,680.5)" stroke-linejoin="round"><path d="M1 6.500 C1 3.500 3 2 6 1.500 L12.500 0.800 L17.200 3.500 L17.200 12.500 L9 16.800 L1 13 Z" fill="#fbfbfb" stroke="#3a3a3a" stroke-width="1.100"/><path d="M1.300 6.500 C1.500 4 3.500 2.300 6 1.800 L12.500 1 L17 3.600 C13 4 10 6 9.200 9.800 Z" fill="#4aa3df" stroke="#174c6c" stroke-width=".8"/><path d="M9 9.800 L9 16.800 M9.200 9.800 C10 6 13 4 17.200 3.600" fill="none" stroke="#3a3a3a" stroke-width=".9"/></g>
<path d="M9.500 289.5 L13.500 293.5 L9.500 297.5 Z" fill="#6a6a6a"/>
<path d="M9.500 421.4 L13.500 425.4 L9.500 429.4 Z" fill="#6a6a6a"/>
<path d="M9.500 465.4 L13.500 469.4 L9.500 473.4 Z" fill="#6a6a6a"/>
<path d="M9.500 509.4 L13.500 513.4 L9.500 517.4 Z" fill="#6a6a6a"/>
<path d="M9.500 531.4 L13.500 535.4 L9.500 539.4 Z" fill="#6a6a6a"/>
<path d="M9.500 553.4 L13.500 557.4 L9.500 561.4 Z" fill="#6a6a6a"/>
<path d="M9.500 575.4 L13.500 579.4 L9.500 583.4 Z" fill="#6a6a6a"/>
<path d="M9.500 597.4 L13.500 601.4 L9.500 605.4 Z" fill="#6a6a6a"/>
<path d="M23.8 102.4 L30.8 102.4 L27.3 106.4 Z" fill="#222"/>
<path d="M78.8 102.4 L85.8 102.4 L82.3 106.4 Z" fill="#222"/>
<path d="M335.8 102.4 L342.8 102.4 L339.3 106.4 Z" fill="#222"/>
<path d="M785.6 102.5 L792.6 102.5 L789.1 106.5 Z" fill="#222"/>
<path d="M146.9 46.9 L153.9 46.9 L150.4 50.9 Z" fill="#222"/>
<path d="M187.1 46.9 L194.1 46.9 L190.6 50.9 Z" fill="#222"/>
<path d="M226.8 46.9 L233.8 46.9 L230.3 50.9 Z" fill="#222"/>
<path d="M146.9 73.4 L153.9 73.4 L150.4 77.4 Z" fill="#222"/>
<path d="M187.1 73.4 L194.1 73.4 L190.6 77.4 Z" fill="#222"/>
<path d="M226.8 73.4 L233.8 73.4 L230.3 77.4 Z" fill="#222"/>
<path d="M146.9 99.5 L153.9 99.5 L150.4 103.5 Z" fill="#222"/>
<path d="M582.0 13.5 L589.0 13.5 L585.5 17.5 Z" fill="#222"/>
<path d="M620.5 13.5 L627.5 13.5 L624.0 17.5 Z" fill="#222"/>
<path d="M659.5 13.5 L666.5 13.5 L663.0 17.5 Z" fill="#222"/>
<path d="M698.5 13.5 L705.5 13.5 L702.0 17.5 Z" fill="#222"/>
<path d="M777.0 13.5 L784.0 13.5 L780.5 17.5 Z" fill="#222"/>
<path d="M867.5 13.5 L874.5 13.5 L871.0 17.5 Z" fill="#222"/>
<path d="M1497.0 13.5 L1504.0 13.5 L1500.5 17.5 Z" fill="#222"/>
<path d="M1564.5 13.0 L1571.5 13.0 L1568.0 17.0 Z" fill="#222"/>
<path d="M286.5 102.4 L293.5 102.4 L290.0 106.4 Z" fill="#aaa"/>
<path d="M675.8 102.5 L682.8 102.5 L679.3 106.5 Z" fill="#aaa"/>
<path d="M226.8 99.5 L233.8 99.5 L230.3 103.5 Z" fill="#aaa"/>
<path d="M623.5 74.0 L630.5 74.0 L627.0 78.0 Z" fill="#aaa"/>
<path d="M623.5 100.0 L630.5 100.0 L627.0 104.0 Z" fill="#aaa"/>
<path d="M737.5 13.5 L744.5 13.5 L741.0 17.5 Z" fill="#aaa"/>
<path d="M946.1 131.0 L953.1 131.0 L949.6 135.0 Z" fill="#8a8a8a"/>
<path d="M985.9 131.0 L992.9 131.0 L989.4 135.0 Z" fill="#8a8a8a"/>
<path d="M1025.5 131.0 L1032.5 131.0 L1029.0 135.0 Z" fill="#8a8a8a"/>
<path d="M1091.9 131.0 L1098.9 131.0 L1095.4 135.0 Z" fill="#8a8a8a"/>
<path d="M1131.2 131.0 L1138.2 131.0 L1134.7 135.0 Z" fill="#8a8a8a"/>
</svg>
<span class="t" style="left:183.0px;top:7.6px;letter-spacing:-0.347px;">File</span>
<span class="t" style="left:217.0px;top:7.6px;letter-spacing:-0.071px;">Edit</span>
<span class="t" style="left:253.0px;top:7.6px;letter-spacing:-0.055px;">View</span>
<span class="t" style="left:294.0px;top:7.6px;letter-spacing:-0.117px;">Insert</span>
<span class="t" style="left:338.3px;top:7.6px;letter-spacing:-0.216px;">Tools</span>
<span class="t" style="left:381.0px;top:7.6px;letter-spacing:0.342px;">Window</span>
<span class="t" style="left:440.7px;top:7.6px;letter-spacing:-0.065px;">Help</span>
<span class="t" style="left:1042.0px;top:7.6px;letter-spacing:-0.646px;">Changes_&amp;.SLDPRT</span>
<span class="t" style="left:1332.5px;top:7.6px;letter-spacing:-0.382px;color:#666;">Search Commands</span>
<span class="t" style="left:8.0px;top:120.6px;letter-spacing:-0.258px;">Features</span>
<span class="t" style="left:68.0px;top:120.6px;letter-spacing:0.111px;font-weight:bold;">Sketch</span>
<span class="t" style="left:124.0px;top:120.6px;letter-spacing:-0.258px;">Surfaces</span>
<span class="t" style="left:184.3px;top:120.6px;letter-spacing:-0.043px;">Sheet Metal</span>
<span class="t" style="left:262.3px;top:120.6px;letter-spacing:0.180px;">Weldments</span>
<span class="t" style="left:338.0px;top:120.6px;letter-spacing:0.096px;">Direct Editing</span>
<span class="t" style="left:425.0px;top:120.6px;letter-spacing:-0.178px;">Evaluate</span>
<span class="t" style="left:485.0px;top:120.6px;letter-spacing:0.121px;">DimXpert</span>
<span class="t" style="left:551.0px;top:120.6px;letter-spacing:-0.230px;">SOLIDWORKS Add-Ins</span>
<span class="t" style="left:684.0px;top:120.6px;letter-spacing:0.455px;">Annotation</span>
<span class="t" style="left:10.7px;top:60.6px;letter-spacing:-0.242px;">Sketch</span>
<span class="t" style="left:68.0px;top:60.6px;letter-spacing:-0.484px;">Smart</span>
<span class="t" style="left:55.0px;top:73.6px;letter-spacing:-0.031px;">Dimension</span>
<span class="t" style="left:280.5px;top:60.6px;letter-spacing:-0.688px;color:#b4b4b4;">Trim</span>
<span class="t" style="left:271.8px;top:73.6px;letter-spacing:-0.066px;color:#b4b4b4;">Entities</span>
<span class="t" style="left:319.9px;top:60.6px;letter-spacing:-0.158px;">Convert</span>
<span class="t" style="left:320.9px;top:73.6px;letter-spacing:-0.066px;">Entities</span>
<span class="t" style="left:373.7px;top:67.6px;letter-spacing:-0.120px;color:#b4b4b4;">Offset</span>
<span class="t" style="left:369.9px;top:80.6px;letter-spacing:-0.066px;color:#b4b4b4;">Entities</span>
<span class="t" style="left:421.7px;top:67.6px;letter-spacing:-0.120px;">Offset</span>
<span class="t" style="left:429.4px;top:80.6px;letter-spacing:-0.484px;">On</span>
<span class="t" style="left:418.2px;top:93.6px;letter-spacing:-0.424px;">Surface</span>
<span class="t" style="left:489.0px;top:41.6px;letter-spacing:0.066px;color:#b4b4b4;">Mirror Entities</span>
<span class="t" style="left:489.0px;top:67.6px;letter-spacing:-0.167px;color:#b4b4b4;">Linear Sketch Pattern</span>
<span class="t" style="left:489.0px;top:93.6px;letter-spacing:-0.007px;color:#b4b4b4;">Move Entities</span>
<span class="t" style="left:642.7px;top:60.6px;letter-spacing:-0.054px;color:#b4b4b4;">Display/Delete</span>
<span class="t" style="left:656.2px;top:73.6px;letter-spacing:-0.149px;color:#b4b4b4;">Relations</span>
<span class="t" style="left:727.0px;top:67.6px;letter-spacing:-0.193px;color:#b4b4b4;">Repair</span>
<span class="t" style="left:726.8px;top:80.6px;letter-spacing:-0.326px;color:#b4b4b4;">Sketch</span>
<span class="t" style="left:774.8px;top:60.6px;letter-spacing:-0.228px;">Quick</span>
<span class="t" style="left:773.8px;top:73.6px;letter-spacing:-0.475px;">Snaps</span>
<span class="t" style="left:820.2px;top:67.6px;letter-spacing:-0.359px;">Rapid</span>
<span class="t" style="left:817.8px;top:80.6px;letter-spacing:-0.326px;">Sketch</span>
<span class="t" style="left:861.5px;top:67.6px;letter-spacing:0.042px;">Instant2D</span>
<span class="t" style="left:927.7px;top:67.6px;letter-spacing:-0.664px;color:#b4b4b4;">Shaded</span>
<span class="t" style="left:929.0px;top:80.6px;letter-spacing:-0.326px;color:#b4b4b4;">Sketch</span>
<span class="t" style="left:922.0px;top:93.6px;letter-spacing:0.057px;color:#b4b4b4;">Contours</span>
<span class="t" style="left:27.1px;top:219.6px;letter-spacing:0.129px;">Changes_&amp;  (Default&lt;&lt;Default&gt;_Disp</span>
<span class="t" style="left:50.4px;top:241.6px;letter-spacing:0.217px;">History</span>
<span class="t" style="left:50.4px;top:263.6px;letter-spacing:-0.419px;">Sensors</span>
<span class="t" style="left:50.4px;top:285.6px;letter-spacing:0.295px;">Annotations</span>
<span class="t" style="left:50.4px;top:307.6px;letter-spacing:0.209px;">Material &lt;not specified&gt;</span>
<span class="t" style="left:50.4px;top:329.6px;letter-spacing:0.067px;">Front</span>
<span class="t" style="left:50.4px;top:351.6px;letter-spacing:0.499px;">Top</span>
<span class="t" style="left:50.4px;top:373.6px;letter-spacing:0.064px;">Right</span>
<span class="t" style="left:50.4px;top:395.6px;letter-spacing:0.194px;">Origin</span>
<span class="t" style="left:50.4px;top:418.0px;letter-spacing:-0.471px;">Base_Plate</span>
<span class="t" style="left:50.4px;top:440.0px;letter-spacing:-0.351px;">Base_Fillet</span>
<span class="t" style="left:50.4px;top:462.0px;letter-spacing:-0.079px;">Vertical_Plate</span>
<span class="t" style="left:50.4px;top:484.0px;letter-spacing:-0.110px;">Circular_Plane</span>
<span class="t" style="left:50.4px;top:506.0px;letter-spacing:-0.182px;">Circular_Boss</span>
<span class="t" style="left:50.4px;top:528.0px;letter-spacing:-0.147px;">Rib_Under</span>
<span class="t" style="left:50.4px;top:550.0px;letter-spacing:-0.001px;">Cut-Extrude3</span>
<span class="t" style="left:50.4px;top:572.0px;letter-spacing:-0.001px;">Cut-Extrude4</span>
<span class="t" style="left:50.4px;top:594.0px;letter-spacing:-0.235px;">CBORE for M6 Hex Head Cap Scre</span>
<span class="t" style="left:50.4px;top:616.0px;letter-spacing:-0.203px;">Rib_Fillet</span>
<span class="t" style="left:50.4px;top:638.0px;letter-spacing:-0.134px;">Fillet1</span>
<span class="t" style="left:50.4px;top:660.0px;letter-spacing:-0.095px;">Circ_Fillet</span>
<span class="t" style="left:50.4px;top:682.0px;letter-spacing:-0.134px;">Fillet2</span>
<span class="t" style="left:104.0px;top:974.6px;letter-spacing:0.300px;font-weight:bold;">Model</span>
<span class="t" style="left:158.3px;top:974.6px;letter-spacing:0.190px;">Motion Study 1</span>
<span class="t" style="left:1.5px;top:993.9px;letter-spacing:-0.363px;">SOLIDWORKS Premium 2018 SP5.0</span>
<span class="t" style="left:1419.5px;top:993.9px;letter-spacing:0.047px;">Editing Part</span>
<span class="t" style="left:1532.0px;top:993.9px;letter-spacing:0.174px;">Custom</span>
<span class="t" style="left:241.0px;top:958.9px;letter-spacing:0.339px;font-weight:bold;font-size:12.6px;">*Isometric</span>
</div>
</body></html>
